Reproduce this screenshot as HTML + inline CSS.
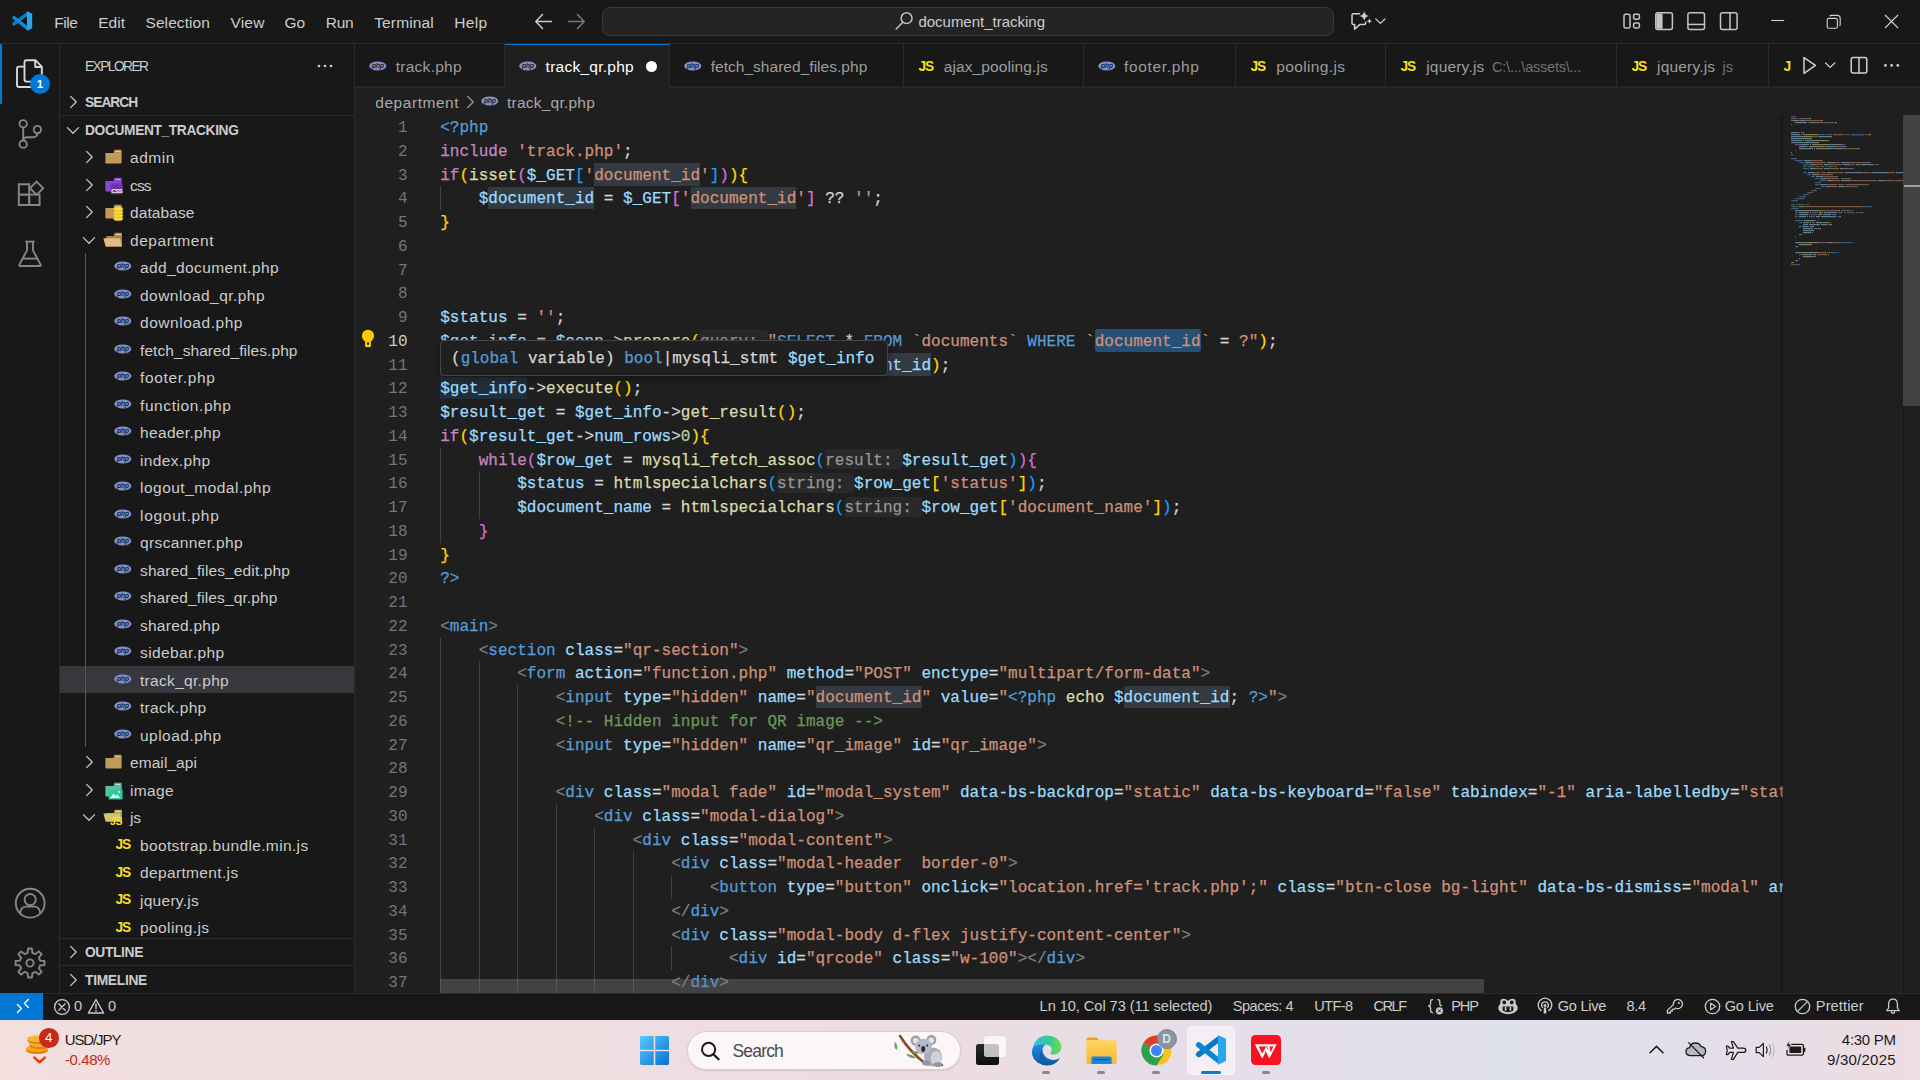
<!DOCTYPE html>
<html lang="en"><head><meta charset="utf-8"><title>track_qr.php - document_tracking - Visual Studio Code</title>
<style>

*{box-sizing:border-box;margin:0;padding:0}
html,body{width:1920px;height:1080px;overflow:hidden;background:#181818}
body{position:relative;font-family:"Liberation Sans",sans-serif;color:#ccc}
.t{position:absolute;white-space:pre;line-height:24px;height:24px}
.b{position:absolute}
svg{position:absolute;overflow:visible}
.code{-webkit-text-stroke:0.25px;position:absolute;left:441px;font-family:"Liberation Mono",monospace;font-size:16px;letter-spacing:0.0234px;white-space:pre;line-height:23.75px;height:23.75px;color:#d4d4d4}
.ln{position:absolute;left:356px;width:52px;text-align:right;font-family:"Liberation Mono",monospace;font-size:16px;letter-spacing:0.0234px;line-height:23.75px;height:23.75px;color:#6e7681}
.k{color:#569cd6}.c{color:#c586c0}.s{color:#ce9178}.v{color:#9cdcfe}.f{color:#dcdcaa}.m{color:#6a9955}.g{color:#808080}.n{color:#b5cea8}
.y{color:#ffd700}.p{color:#da70d6}.u{color:#179fff}
.h{color:#969696}


</style></head>
<body>
<!-- title bar -->
<div class="b" style="left:0px;top:0px;width:1920px;height:44px;background:#181818;border-bottom:1px solid #2b2b2b;"></div>
<svg style="left:11.9px;top:11px" width="20.4" height="20" viewBox="0 0 30 30">
<path d="M2.7 19.4 L22.6 4.2" stroke="#0a7fc8" stroke-width="5.2" stroke-linecap="round"/>
<path d="M2.7 9.9 L22.6 25.6" stroke="#0b8ad6" stroke-width="5.2" stroke-linecap="round"/>
<path d="M22.4 0.2 Q22 0 22 0.6 V29.2 Q22 29.9 22.6 29.6 L29.4 26.2 Q30 25.9 30 25.2 V4.6 Q30 3.9 29.4 3.6 Z" fill="#27a5f1"/>
<path d="M22 9 L14.4 14.8 L22 20.6 Z" fill="#181818"/>
</svg>
<div class="t " style="font-size:15.5px;color:#cccccc;top:10.55px;letter-spacing:-0.431px;left:54.25px;">File</div>
<div class="t " style="font-size:15.5px;color:#cccccc;top:10.55px;letter-spacing:0.010px;left:98.25px;">Edit</div>
<div class="t " style="font-size:15.5px;color:#cccccc;top:10.55px;letter-spacing:0.082px;left:145.50px;">Selection</div>
<div class="t " style="font-size:15.5px;color:#cccccc;top:10.55px;letter-spacing:0.171px;left:230.50px;">View</div>
<div class="t " style="font-size:15.5px;color:#cccccc;top:10.55px;letter-spacing:-0.088px;left:284.50px;">Go</div>
<div class="t " style="font-size:15.5px;color:#cccccc;top:10.55px;letter-spacing:-0.312px;left:325.75px;">Run</div>
<div class="t " style="font-size:15.5px;color:#cccccc;top:10.55px;letter-spacing:0.116px;left:374.25px;">Terminal</div>
<div class="t " style="font-size:15.5px;color:#cccccc;top:10.55px;letter-spacing:0.343px;left:454.25px;">Help</div>
<svg style="left:534px;top:13px" width="19" height="17" viewBox="0 0 19 17"><path d="M8.5 1.5 L1.8 8.5 L8.5 15.5 M1.8 8.5 H17.5" fill="none" stroke="#cccccc" stroke-width="1.5" stroke-linecap="round" stroke-linejoin="round"/></svg>
<svg style="left:566.5px;top:13px" width="19" height="17" viewBox="0 0 19 17"><path d="M10.5 1.5 L17.2 8.5 L10.5 15.5 M17.2 8.5 H1.5" fill="none" stroke="#7a7a7a" stroke-width="1.5" stroke-linecap="round" stroke-linejoin="round"/></svg>
<div class="b" style="left:602px;top:7px;width:732px;height:29px;background:#242424;border:1px solid #3a3a3a;border-radius:8px;"></div>
<svg style="left:895px;top:11px" width="19" height="20" viewBox="0 0 19 20"><circle cx="11.6" cy="7.2" r="5.4" fill="none" stroke="#c0c0c0" stroke-width="1.5"/><path d="M7.8 11.2 L1.2 18" stroke="#c0c0c0" stroke-width="1.6" stroke-linecap="round"/></svg>
<div class="t " style="font-size:15px;color:#cccccc;top:10.30px;letter-spacing:-0.008px;left:918.40px;">document_tracking</div>
<svg style="left:1350px;top:10px" width="37" height="22" viewBox="0 0 37 22">
<path d="M9.5 3.8 H3.4 Q2 3.8 2 5.2 V13.2 Q2 14.6 3.4 14.6 H4.6 V19.2 L9.6 14.6 H14.2 Q15.6 14.6 15.6 13.2 V12.2" fill="none" stroke="#d0d0d0" stroke-width="1.5" stroke-linejoin="round" stroke-linecap="round"/>
<path d="M14.2 1 Q14.8 5.4 19.2 6 Q14.8 6.6 14.2 11 Q13.6 6.6 9.2 6 Q13.6 5.4 14.2 1 Z" fill="#d0d0d0"/>
<path d="M19.4 8.6 Q19.7 10.9 22 11.2 Q19.7 11.5 19.4 13.8 Q19.1 11.5 16.8 11.2 Q19.1 10.9 19.4 8.6 Z" fill="#d0d0d0"/>
<path d="M25.8 9 L30.4 13.4 L35 9" fill="none" stroke="#c8c8c8" stroke-width="1.3" stroke-linecap="round" stroke-linejoin="round"/>
</svg>
<svg style="left:1622px;top:11px" width="120" height="21" viewBox="0 0 120 21">
<g fill="none" stroke="#c4c4c4" stroke-width="1.5">
<rect x="2" y="3.2" width="6" height="13.8" rx="1.6"/>
<rect x="11.6" y="3.2" width="5.8" height="5" rx="1.4"/>
<rect x="11.6" y="12" width="5.8" height="5" rx="1.4"/>
<rect x="33.8" y="1.8" width="16.6" height="16.6" rx="2"/>
<rect x="65.9" y="1.8" width="16.6" height="16.6" rx="2"/>
<path d="M65.9 13.4 H82.5"/>
<rect x="98.5" y="1.8" width="16.6" height="16.6" rx="2"/>
<path d="M108 1.8 V18.4"/>
</g>
<path d="M35.6 2.4 H40.6 V17.8 H35.6 Q34.4 17.8 34.4 16.6 V3.6 Q34.4 2.4 35.6 2.4 Z" fill="#c4c4c4"/>
</svg>
<svg style="left:1770px;top:13px" width="132" height="18" viewBox="0 0 132 18">
<g fill="none" stroke="#d0d0d0" stroke-width="1.1">
<path d="M1.2 7.5 H14.2"/>
<rect x="57.2" y="5.4" width="10.2" height="9.8" rx="1.8"/>
<path d="M59.6 3 Q60.2 2.4 61.6 2.4 H67.2 Q70.2 2.4 70.2 5.4 V11 Q70.2 12.4 69.6 13"/>
<path d="M115 2 L128 15 M128 2 L115 15"/>
</g></svg>
<!-- activity bar -->
<div class="b" style="left:0px;top:44px;width:60px;height:949px;background:#181818;border-right:1px solid #2b2b2b;"></div>
<div class="b" style="left:0px;top:44px;width:2px;height:60px;background:#0078d4;"></div>
<svg style="left:15px;top:58px" width="30" height="32" viewBox="0 0 30 32">
<g fill="none" stroke="#d7d7d7" stroke-width="1.9" stroke-linejoin="round">
<path d="M9.5 8.4 V4.2 Q9.5 2.2 11.5 2.2 H20.4 L26.8 8.6 V21.6 Q26.8 23.6 24.8 23.6 H11.5 Q9.5 23.6 9.5 21.6 Z"/>
<path d="M20.2 2.4 V9 H26.6"/>
<path d="M9.5 8.6 H4 Q2 8.6 2 10.6 V27 Q2 29 4 29 H16 Q18 29 18 27 V23.8"/>
</g></svg>
<div class="b" style="left:30px;top:74px;width:20px;height:20px;border-radius:50%;background:#0078d4;color:#fff;font-size:11.5px;font-weight:bold;text-align:center;line-height:20px">1</div>
<svg style="left:17px;top:118px" width="27" height="32" viewBox="0 0 27 32">
<g fill="none" stroke="#868686" stroke-width="1.9">
<circle cx="6.2" cy="5.8" r="3.7"/><circle cx="6.2" cy="26.2" r="3.7"/><circle cx="20.4" cy="11.6" r="3.7"/>
<path d="M6.2 9.6 V22.4"/><path d="M20.4 15.4 Q20.4 19.2 14.6 19.2 H10.6 Q6.2 19.2 6.2 22.4" />
</g></svg>
<svg style="left:16px;top:179px" width="30" height="30" viewBox="0 0 30 30">
<g fill="none" stroke="#868686" stroke-width="1.9" stroke-linejoin="miter">
<path d="M2.8 5.2 H13.2 V15.6 H2.8 Z"/><path d="M2.8 15.6 H13.2 V26 H2.8 Z"/><path d="M13.2 15.6 H23.6 V26 H13.2 Z"/>
<path d="M20.6 2.6 L27.2 9.2 L20.6 15.8 L14 9.2 Z"/>
</g></svg>
<svg style="left:17px;top:239px" width="27" height="30" viewBox="0 0 27 30">
<g fill="none" stroke="#868686" stroke-width="1.9" stroke-linejoin="round">
<path d="M8.4 2.6 H17.6"/><path d="M10 2.6 V11.4 L2.4 25.6 Q1.8 27 3.4 27 H22.6 Q24.2 27 23.6 25.6 L16 11.4 V2.6"/><path d="M5.6 19.6 H20.4"/>
</g></svg>
<svg style="left:14px;top:887px" width="33" height="33" viewBox="0 0 33 33">
<g fill="none" stroke="#868686" stroke-width="1.9">
<circle cx="16.2" cy="16.2" r="14.4"/><circle cx="16.2" cy="12.6" r="5.6"/>
<path d="M6.2 26.2 Q7 19.6 12 19.6 H20.4 Q25.4 19.6 26.2 26.2"/>
</g></svg>
<svg style="left:14px;top:947px" width="32" height="32" viewBox="0 0 32 32">
<g fill="none" stroke="#868686" stroke-width="1.9" stroke-linejoin="round">
<path d="M13.57 5.89 L14.06 1.53 L17.94 1.53 L18.43 5.89 L21.43 7.13 L24.86 4.39 L27.61 7.14 L24.87 10.57 L26.11 13.57 L30.47 14.06 L30.47 17.94 L26.11 18.43 L24.87 21.43 L27.61 24.86 L24.86 27.61 L21.43 24.87 L18.43 26.11 L17.94 30.47 L14.06 30.47 L13.57 26.11 L10.57 24.87 L7.14 27.61 L4.39 24.86 L7.13 21.43 L5.89 18.43 L1.53 17.94 L1.53 14.06 L5.89 13.57 L7.13 10.57 L4.39 7.14 L7.14 4.39 L10.57 7.13 Z"/><circle cx="16" cy="16" r="3.6"/>
</g></svg>
<!-- sidebar -->
<div class="b" style="left:60px;top:44px;width:295px;height:949px;background:#181818;border-right:1px solid #2b2b2b;"></div>
<div class="t " style="font-size:13.75px;color:#cccccc;top:54.80px;letter-spacing:-1.548px;left:85.00px;">EXPLORER</div>
<svg style="left:317px;top:64px" width="16" height="4" viewBox="0 0 16 4"><circle cx="2" cy="2" r="1.35" fill="#ccc"/><circle cx="8" cy="2" r="1.35" fill="#ccc"/><circle cx="14" cy="2" r="1.35" fill="#ccc"/></svg>
<svg style="left:69px;top:95px" width="9" height="14" viewBox="0 0 9 14"><path d="M1.6 1.4 L7.2 7 L1.6 12.6" fill="none" stroke="#c5c5c5" stroke-width="1.3" stroke-linecap="round" stroke-linejoin="round"/></svg>
<div class="t " style="font-size:13.75px;color:#cccccc;top:91.10px;font-weight:bold;letter-spacing:-0.977px;left:85.00px;">SEARCH</div>
<div class="b" style="left:60px;top:115px;width:294px;height:1px;background:#2b2b2b;"></div>
<svg style="left:65.5px;top:126px" width="14" height="9" viewBox="0 0 14 9"><path d="M1.4 1.6 L7 7.2 L12.6 1.6" fill="none" stroke="#c5c5c5" stroke-width="1.3" stroke-linecap="round" stroke-linejoin="round"/></svg>
<div class="t " style="font-size:13.75px;color:#cccccc;top:118.80px;font-weight:bold;letter-spacing:-0.362px;left:85.00px;">DOCUMENT_TRACKING</div>
<div class="b" style="left:60px;top:143px;width:294px;height:795px;overflow:hidden">
<svg style="left:25.2px;top:6.75px" width="9" height="14" viewBox="0 0 9 14"><path d="M1.6 1.4 L7.2 7 L1.6 12.6" fill="none" stroke="#c5c5c5" stroke-width="1.3" stroke-linecap="round" stroke-linejoin="round"/></svg>
<svg style="left:45px;top:6.15px" width="20" height="18" viewBox="0 0 20 18"><path d="M9.4 0.8 H15.8 Q16.6 0.8 16.6 1.6 V5 H8.2 Z" fill="#b98f4f"/><path d="M10.6 2.5 H15.4" stroke="#e8d2a8" stroke-width=".9"/><path d="M0.4 4 H16.6 V13.8 Q16.6 14.6 15.8 14.6 H1.2 Q0.4 14.6 0.4 13.8 Z" fill="#c49a5a"/></svg>
<div class="t " style="font-size:15.5px;color:#cccccc;top:3.10px;letter-spacing:0.557px;left:70.00px;">admin</div>
<svg style="left:25.2px;top:34.75px" width="9" height="14" viewBox="0 0 9 14"><path d="M1.6 1.4 L7.2 7 L1.6 12.6" fill="none" stroke="#c5c5c5" stroke-width="1.3" stroke-linecap="round" stroke-linejoin="round"/></svg>
<svg style="left:45px;top:34.15px" width="20" height="18" viewBox="0 0 20 18"><path d="M9.4 0.8 H15.8 Q16.6 0.8 16.6 1.6 V5 H8.2 Z" fill="#8a46d8"/><path d="M10.6 2.5 H15.4" stroke="#c9a6f2" stroke-width=".9"/><path d="M0.4 4 H16.6 V13.8 Q16.6 14.6 15.8 14.6 H1.2 Q0.4 14.6 0.4 13.8 Z" fill="#8a46d8"/><rect x="5.6" y="6.6" width="12.2" height="10.6" rx="1.2" fill="#6b36a8"/><text x="11.8" y="15.6" font-size="5.8" font-weight="bold" text-anchor="middle" fill="#ffffff" font-family="Liberation Sans, sans-serif" letter-spacing="-0.25">CSS</text></svg>
<div class="t " style="font-size:15.5px;color:#cccccc;top:30.60px;letter-spacing:-0.850px;left:70.00px;">css</div>
<svg style="left:25.2px;top:61.75px" width="9" height="14" viewBox="0 0 9 14"><path d="M1.6 1.4 L7.2 7 L1.6 12.6" fill="none" stroke="#c5c5c5" stroke-width="1.3" stroke-linecap="round" stroke-linejoin="round"/></svg>
<svg style="left:45px;top:61.15px" width="20" height="18" viewBox="0 0 20 18"><path d="M9.4 0.8 H15.8 Q16.6 0.8 16.6 1.6 V5 H8.2 Z" fill="#b98f4f"/><path d="M10.6 2.5 H15.4" stroke="#e8d2a8" stroke-width=".9"/><path d="M0.4 4 H16.6 V13.8 Q16.6 14.6 15.8 14.6 H1.2 Q0.4 14.6 0.4 13.8 Z" fill="#c49a5a"/><g fill="#fbdc3c" stroke="#c9a227" stroke-width=".55"><ellipse cx="13.2" cy="14.6" rx="4.7" ry="2.2"/><ellipse cx="13.2" cy="11.4" rx="4.7" ry="2.2"/><ellipse cx="13.2" cy="8.2" rx="4.7" ry="2.2"/><ellipse cx="13.2" cy="5" rx="4.7" ry="2.2"/></g></svg>
<div class="t " style="font-size:15.5px;color:#cccccc;top:58.10px;letter-spacing:0.090px;left:70.00px;">database</div>
<svg style="left:22px;top:92.75px" width="14" height="9" viewBox="0 0 14 9"><path d="M1.4 1.6 L7 7.2 L12.6 1.6" fill="none" stroke="#c5c5c5" stroke-width="1.3" stroke-linecap="round" stroke-linejoin="round"/></svg>
<svg style="left:42.5px;top:89.15px" width="22" height="18" viewBox="0 0 22 18"><path d="M11.6 0.8 H18.2 Q19 0.8 19 1.6 V6 H10.4 Z" fill="#b48b4e"/><path d="M12.8 2.5 H17.8" stroke="#e8d2a8" stroke-width=".9"/><path d="M3.4 4 H19 V14.6 H3.4 Z" fill="#a98449"/><path d="M0.4 6.2 H17 L18.8 14.6 H2.6 Z" fill="#e0bd84"/></svg>
<div class="t " style="font-size:15.5px;color:#cccccc;top:85.60px;letter-spacing:0.559px;left:70.00px;">department</div>
<svg style="left:54.0px;top:118.15px" width="18" height="11" viewBox="0 0 18 11"><ellipse cx="8.8" cy="5" rx="8.6" ry="4.6" fill="#8290c4"/><text x="8.8" y="7.4" font-size="7" font-style="italic" font-weight="bold" text-anchor="middle" fill="#1f2540" font-family="Liberation Sans, sans-serif" letter-spacing="-0.2">php</text></svg>
<div class="t " style="font-size:15.5px;color:#cccccc;top:113.10px;letter-spacing:0.393px;left:80.00px;">add_document.php</div>
<svg style="left:54.0px;top:146.15px" width="18" height="11" viewBox="0 0 18 11"><ellipse cx="8.8" cy="5" rx="8.6" ry="4.6" fill="#8290c4"/><text x="8.8" y="7.4" font-size="7" font-style="italic" font-weight="bold" text-anchor="middle" fill="#1f2540" font-family="Liberation Sans, sans-serif" letter-spacing="-0.2">php</text></svg>
<div class="t " style="font-size:15.5px;color:#cccccc;top:140.60px;letter-spacing:0.462px;left:80.00px;">download_qr.php</div>
<svg style="left:54.0px;top:173.15px" width="18" height="11" viewBox="0 0 18 11"><ellipse cx="8.8" cy="5" rx="8.6" ry="4.6" fill="#8290c4"/><text x="8.8" y="7.4" font-size="7" font-style="italic" font-weight="bold" text-anchor="middle" fill="#1f2540" font-family="Liberation Sans, sans-serif" letter-spacing="-0.2">php</text></svg>
<div class="t " style="font-size:15.5px;color:#cccccc;top:168.10px;letter-spacing:0.539px;left:80.00px;">download.php</div>
<svg style="left:54.0px;top:201.15px" width="18" height="11" viewBox="0 0 18 11"><ellipse cx="8.8" cy="5" rx="8.6" ry="4.6" fill="#8290c4"/><text x="8.8" y="7.4" font-size="7" font-style="italic" font-weight="bold" text-anchor="middle" fill="#1f2540" font-family="Liberation Sans, sans-serif" letter-spacing="-0.2">php</text></svg>
<div class="t " style="font-size:15.5px;color:#cccccc;top:195.60px;letter-spacing:0.070px;left:80.00px;">fetch_shared_files.php</div>
<svg style="left:54.0px;top:228.15px" width="18" height="11" viewBox="0 0 18 11"><ellipse cx="8.8" cy="5" rx="8.6" ry="4.6" fill="#8290c4"/><text x="8.8" y="7.4" font-size="7" font-style="italic" font-weight="bold" text-anchor="middle" fill="#1f2540" font-family="Liberation Sans, sans-serif" letter-spacing="-0.2">php</text></svg>
<div class="t " style="font-size:15.5px;color:#cccccc;top:223.10px;letter-spacing:0.655px;left:80.00px;">footer.php</div>
<svg style="left:54.0px;top:256.15px" width="18" height="11" viewBox="0 0 18 11"><ellipse cx="8.8" cy="5" rx="8.6" ry="4.6" fill="#8290c4"/><text x="8.8" y="7.4" font-size="7" font-style="italic" font-weight="bold" text-anchor="middle" fill="#1f2540" font-family="Liberation Sans, sans-serif" letter-spacing="-0.2">php</text></svg>
<div class="t " style="font-size:15.5px;color:#cccccc;top:250.60px;letter-spacing:0.587px;left:80.00px;">function.php</div>
<svg style="left:54.0px;top:283.15px" width="18" height="11" viewBox="0 0 18 11"><ellipse cx="8.8" cy="5" rx="8.6" ry="4.6" fill="#8290c4"/><text x="8.8" y="7.4" font-size="7" font-style="italic" font-weight="bold" text-anchor="middle" fill="#1f2540" font-family="Liberation Sans, sans-serif" letter-spacing="-0.2">php</text></svg>
<div class="t " style="font-size:15.5px;color:#cccccc;top:278.10px;letter-spacing:0.342px;left:80.00px;">header.php</div>
<svg style="left:54.0px;top:311.15px" width="18" height="11" viewBox="0 0 18 11"><ellipse cx="8.8" cy="5" rx="8.6" ry="4.6" fill="#8290c4"/><text x="8.8" y="7.4" font-size="7" font-style="italic" font-weight="bold" text-anchor="middle" fill="#1f2540" font-family="Liberation Sans, sans-serif" letter-spacing="-0.2">php</text></svg>
<div class="t " style="font-size:15.5px;color:#cccccc;top:305.60px;letter-spacing:0.364px;left:80.00px;">index.php</div>
<svg style="left:54.0px;top:338.15px" width="18" height="11" viewBox="0 0 18 11"><ellipse cx="8.8" cy="5" rx="8.6" ry="4.6" fill="#8290c4"/><text x="8.8" y="7.4" font-size="7" font-style="italic" font-weight="bold" text-anchor="middle" fill="#1f2540" font-family="Liberation Sans, sans-serif" letter-spacing="-0.2">php</text></svg>
<div class="t " style="font-size:15.5px;color:#cccccc;top:333.10px;letter-spacing:0.485px;left:80.00px;">logout_modal.php</div>
<svg style="left:54.0px;top:366.15px" width="18" height="11" viewBox="0 0 18 11"><ellipse cx="8.8" cy="5" rx="8.6" ry="4.6" fill="#8290c4"/><text x="8.8" y="7.4" font-size="7" font-style="italic" font-weight="bold" text-anchor="middle" fill="#1f2540" font-family="Liberation Sans, sans-serif" letter-spacing="-0.2">php</text></svg>
<div class="t " style="font-size:15.5px;color:#cccccc;top:360.60px;letter-spacing:0.710px;left:80.00px;">logout.php</div>
<svg style="left:54.0px;top:393.15px" width="18" height="11" viewBox="0 0 18 11"><ellipse cx="8.8" cy="5" rx="8.6" ry="4.6" fill="#8290c4"/><text x="8.8" y="7.4" font-size="7" font-style="italic" font-weight="bold" text-anchor="middle" fill="#1f2540" font-family="Liberation Sans, sans-serif" letter-spacing="-0.2">php</text></svg>
<div class="t " style="font-size:15.5px;color:#cccccc;top:388.10px;letter-spacing:0.366px;left:80.00px;">qrscanner.php</div>
<svg style="left:54.0px;top:421.15px" width="18" height="11" viewBox="0 0 18 11"><ellipse cx="8.8" cy="5" rx="8.6" ry="4.6" fill="#8290c4"/><text x="8.8" y="7.4" font-size="7" font-style="italic" font-weight="bold" text-anchor="middle" fill="#1f2540" font-family="Liberation Sans, sans-serif" letter-spacing="-0.2">php</text></svg>
<div class="t " style="font-size:15.5px;color:#cccccc;top:415.60px;letter-spacing:0.126px;left:80.00px;">shared_files_edit.php</div>
<svg style="left:54.0px;top:448.15px" width="18" height="11" viewBox="0 0 18 11"><ellipse cx="8.8" cy="5" rx="8.6" ry="4.6" fill="#8290c4"/><text x="8.8" y="7.4" font-size="7" font-style="italic" font-weight="bold" text-anchor="middle" fill="#1f2540" font-family="Liberation Sans, sans-serif" letter-spacing="-0.2">php</text></svg>
<div class="t " style="font-size:15.5px;color:#cccccc;top:443.10px;letter-spacing:0.116px;left:80.00px;">shared_files_qr.php</div>
<svg style="left:54.0px;top:476.15px" width="18" height="11" viewBox="0 0 18 11"><ellipse cx="8.8" cy="5" rx="8.6" ry="4.6" fill="#8290c4"/><text x="8.8" y="7.4" font-size="7" font-style="italic" font-weight="bold" text-anchor="middle" fill="#1f2540" font-family="Liberation Sans, sans-serif" letter-spacing="-0.2">php</text></svg>
<div class="t " style="font-size:15.5px;color:#cccccc;top:470.60px;letter-spacing:0.244px;left:80.00px;">shared.php</div>
<svg style="left:54.0px;top:503.15px" width="18" height="11" viewBox="0 0 18 11"><ellipse cx="8.8" cy="5" rx="8.6" ry="4.6" fill="#8290c4"/><text x="8.8" y="7.4" font-size="7" font-style="italic" font-weight="bold" text-anchor="middle" fill="#1f2540" font-family="Liberation Sans, sans-serif" letter-spacing="-0.2">php</text></svg>
<div class="t " style="font-size:15.5px;color:#cccccc;top:498.10px;letter-spacing:0.395px;left:80.00px;">sidebar.php</div>
<div class="b" style="left:0px;top:523px;width:294px;height:27px;background:#37373d;"></div>
<svg style="left:54.0px;top:531.15px" width="18" height="11" viewBox="0 0 18 11"><ellipse cx="8.8" cy="5" rx="8.6" ry="4.6" fill="#8290c4"/><text x="8.8" y="7.4" font-size="7" font-style="italic" font-weight="bold" text-anchor="middle" fill="#1f2540" font-family="Liberation Sans, sans-serif" letter-spacing="-0.2">php</text></svg>
<div class="t " style="font-size:15.5px;color:#cccccc;top:525.60px;letter-spacing:0.308px;left:80.00px;">track_qr.php</div>
<svg style="left:54.0px;top:558.15px" width="18" height="11" viewBox="0 0 18 11"><ellipse cx="8.8" cy="5" rx="8.6" ry="4.6" fill="#8290c4"/><text x="8.8" y="7.4" font-size="7" font-style="italic" font-weight="bold" text-anchor="middle" fill="#1f2540" font-family="Liberation Sans, sans-serif" letter-spacing="-0.2">php</text></svg>
<div class="t " style="font-size:15.5px;color:#cccccc;top:553.10px;letter-spacing:0.305px;left:80.00px;">track.php</div>
<svg style="left:54.0px;top:586.15px" width="18" height="11" viewBox="0 0 18 11"><ellipse cx="8.8" cy="5" rx="8.6" ry="4.6" fill="#8290c4"/><text x="8.8" y="7.4" font-size="7" font-style="italic" font-weight="bold" text-anchor="middle" fill="#1f2540" font-family="Liberation Sans, sans-serif" letter-spacing="-0.2">php</text></svg>
<div class="t " style="font-size:15.5px;color:#cccccc;top:580.60px;letter-spacing:0.479px;left:80.00px;">upload.php</div>
<svg style="left:25.2px;top:611.75px" width="9" height="14" viewBox="0 0 9 14"><path d="M1.6 1.4 L7.2 7 L1.6 12.6" fill="none" stroke="#c5c5c5" stroke-width="1.3" stroke-linecap="round" stroke-linejoin="round"/></svg>
<svg style="left:45px;top:611.15px" width="20" height="18" viewBox="0 0 20 18"><path d="M9.4 0.8 H15.8 Q16.6 0.8 16.6 1.6 V5 H8.2 Z" fill="#b98f4f"/><path d="M10.6 2.5 H15.4" stroke="#e8d2a8" stroke-width=".9"/><path d="M0.4 4 H16.6 V13.8 Q16.6 14.6 15.8 14.6 H1.2 Q0.4 14.6 0.4 13.8 Z" fill="#c49a5a"/></svg>
<div class="t " style="font-size:15.5px;color:#cccccc;top:608.10px;letter-spacing:0.073px;left:70.00px;">email_api</div>
<svg style="left:25.2px;top:639.75px" width="9" height="14" viewBox="0 0 9 14"><path d="M1.6 1.4 L7.2 7 L1.6 12.6" fill="none" stroke="#c5c5c5" stroke-width="1.3" stroke-linecap="round" stroke-linejoin="round"/></svg>
<svg style="left:45px;top:639.15px" width="20" height="18" viewBox="0 0 20 18"><path d="M9.4 0.8 H15.8 Q16.6 0.8 16.6 1.6 V5 H8.2 Z" fill="#57b897"/><path d="M10.6 2.5 H15.4" stroke="#bfeedd" stroke-width=".9"/><path d="M0.4 4 H16.6 V13.8 Q16.6 14.6 15.8 14.6 H1.2 Q0.4 14.6 0.4 13.8 Z" fill="#5fbf9f"/><rect x="3.6" y="7.4" width="14" height="10" rx=".8" fill="#2bcaa0"/><path d="M5.4 16 L8.6 11.6 L10.6 14.2 L12.2 12.6 L15 16 Z" fill="#ffffff"/><circle cx="14.2" cy="10" r="1" fill="#ffffff"/></svg>
<div class="t " style="font-size:15.5px;color:#cccccc;top:635.60px;letter-spacing:0.357px;left:70.00px;">image</div>
<svg style="left:22px;top:669.75px" width="14" height="9" viewBox="0 0 14 9"><path d="M1.4 1.6 L7 7.2 L12.6 1.6" fill="none" stroke="#c5c5c5" stroke-width="1.3" stroke-linecap="round" stroke-linejoin="round"/></svg>
<svg style="left:42.5px;top:666.15px" width="22" height="20" viewBox="0 0 22 20"><path d="M11.6 0.8 H18.2 Q19 0.8 19 1.6 V6 H10.4 Z" fill="#b5a85a"/><path d="M12.8 2.5 H17.8" stroke="#ece3a8" stroke-width=".9"/><path d="M3.4 4 H19 V12.6 H3.4 Z" fill="#a89b50"/><path d="M0.4 4.6 H17 L18.8 12.6 H2.6 Z" fill="#d3c66e"/><text x="13" y="16.4" font-size="10.5" font-weight="bold" text-anchor="middle" fill="#f7df1e" font-family="Liberation Sans, sans-serif" letter-spacing="-0.5">JS</text></svg>
<div class="t " style="font-size:15.5px;color:#cccccc;top:663.10px;letter-spacing:-0.097px;left:70.00px;">js</div>
<div class="t" style="left:55.5px;top:690.15px;font-size:13.75px;font-weight:bold;color:#f7df1e;letter-spacing:-1.1px">JS</div>
<div class="t " style="font-size:15.5px;color:#cccccc;top:690.60px;letter-spacing:0.358px;left:80.00px;">bootstrap.bundle.min.js</div>
<div class="t" style="left:55.5px;top:717.65px;font-size:13.75px;font-weight:bold;color:#f7df1e;letter-spacing:-1.1px">JS</div>
<div class="t " style="font-size:15.5px;color:#cccccc;top:718.10px;letter-spacing:0.353px;left:80.00px;">department.js</div>
<div class="t" style="left:55.5px;top:745.15px;font-size:13.75px;font-weight:bold;color:#f7df1e;letter-spacing:-1.1px">JS</div>
<div class="t " style="font-size:15.5px;color:#cccccc;top:745.60px;letter-spacing:0.270px;left:80.00px;">jquery.js</div>
<div class="t" style="left:55.5px;top:772.65px;font-size:13.75px;font-weight:bold;color:#f7df1e;letter-spacing:-1.1px">JS</div>
<div class="t " style="font-size:15.5px;color:#cccccc;top:773.10px;letter-spacing:0.401px;left:80.00px;">pooling.js</div>
<div class="b" style="left:25px;top:110px;width:1px;height:494px;background:#585858;"></div>
</div>
<div class="b" style="left:60px;top:938px;width:294px;height:1px;background:#2b2b2b;"></div>
<svg style="left:69px;top:945px" width="9" height="14" viewBox="0 0 9 14"><path d="M1.6 1.4 L7.2 7 L1.6 12.6" fill="none" stroke="#c5c5c5" stroke-width="1.3" stroke-linecap="round" stroke-linejoin="round"/></svg>
<div class="t " style="font-size:13.75px;color:#cccccc;top:941.10px;font-weight:bold;letter-spacing:-0.335px;left:85.00px;">OUTLINE</div>
<div class="b" style="left:60px;top:965px;width:294px;height:1px;background:#2b2b2b;"></div>
<svg style="left:69px;top:972.5px" width="9" height="14" viewBox="0 0 9 14"><path d="M1.6 1.4 L7.2 7 L1.6 12.6" fill="none" stroke="#c5c5c5" stroke-width="1.3" stroke-linecap="round" stroke-linejoin="round"/></svg>
<div class="t " style="font-size:13.75px;color:#cccccc;top:968.60px;font-weight:bold;letter-spacing:-0.271px;left:85.00px;">TIMELINE</div>
<!-- tabs -->
<div class="b" style="left:355px;top:44px;width:1565px;height:44px;background:#181818;border-bottom:1px solid #2b2b2b;"></div>
<div class="b" style="left:355px;top:86px;width:1565px;height:1px;background:#212121;"></div>
<div class="b" style="left:355px;top:44px;width:150px;height:42px;background:#181818;border-right:1px solid #2b2b2b;"></div>
<svg style="left:369.0px;top:60.699999999999996px" width="18" height="11" viewBox="0 0 18 11"><ellipse cx="8.8" cy="5" rx="8.6" ry="4.6" fill="#8290c4"/><text x="8.8" y="7.4" font-size="7" font-style="italic" font-weight="bold" text-anchor="middle" fill="#1f2540" font-family="Liberation Sans, sans-serif" letter-spacing="-0.2">php</text></svg>
<div class="t " style="font-size:15.5px;color:#9d9d9d;top:54.55px;letter-spacing:0.272px;left:395.70px;">track.php</div>
<div class="b" style="left:505px;top:44px;width:165px;height:44px;background:#1f1f1f;border-top:1.5px solid #0078d4;border-right:1px solid #2b2b2b;"></div>
<svg style="left:519.0px;top:60.699999999999996px" width="18" height="11" viewBox="0 0 18 11"><ellipse cx="8.8" cy="5" rx="8.6" ry="4.6" fill="#8290c4"/><text x="8.8" y="7.4" font-size="7" font-style="italic" font-weight="bold" text-anchor="middle" fill="#1f2540" font-family="Liberation Sans, sans-serif" letter-spacing="-0.2">php</text></svg>
<div class="t " style="font-size:15.5px;color:#ffffff;top:54.55px;letter-spacing:0.258px;left:545.60px;">track_qr.php</div>
<div class="b" style="left:646.3px;top:60.5px;width:11px;height:11px;border-radius:50%;background:#ffffff"></div>
<div class="b" style="left:670px;top:44px;width:234px;height:42px;background:#181818;border-right:1px solid #2b2b2b;"></div>
<svg style="left:684.0px;top:60.699999999999996px" width="18" height="11" viewBox="0 0 18 11"><ellipse cx="8.8" cy="5" rx="8.6" ry="4.6" fill="#8290c4"/><text x="8.8" y="7.4" font-size="7" font-style="italic" font-weight="bold" text-anchor="middle" fill="#1f2540" font-family="Liberation Sans, sans-serif" letter-spacing="-0.2">php</text></svg>
<div class="t " style="font-size:15.5px;color:#9d9d9d;top:54.55px;letter-spacing:0.029px;left:710.70px;">fetch_shared_files.php</div>
<div class="b" style="left:904px;top:44px;width:180px;height:42px;background:#181818;border-right:1px solid #2b2b2b;"></div>
<div class="t" style="left:918.5px;top:55.1px;font-size:13.75px;font-weight:bold;color:#f7df1e;letter-spacing:-1.1px">JS</div>
<div class="t " style="font-size:15.5px;color:#9d9d9d;top:54.55px;letter-spacing:0.110px;left:943.70px;">ajax_pooling.js</div>
<div class="b" style="left:1084px;top:44px;width:152px;height:42px;background:#181818;border-right:1px solid #2b2b2b;"></div>
<svg style="left:1098.0px;top:60.699999999999996px" width="18" height="11" viewBox="0 0 18 11"><ellipse cx="8.8" cy="5" rx="8.6" ry="4.6" fill="#8290c4"/><text x="8.8" y="7.4" font-size="7" font-style="italic" font-weight="bold" text-anchor="middle" fill="#1f2540" font-family="Liberation Sans, sans-serif" letter-spacing="-0.2">php</text></svg>
<div class="t " style="font-size:15.5px;color:#9d9d9d;top:54.55px;letter-spacing:0.655px;left:1124.00px;">footer.php</div>
<div class="b" style="left:1236px;top:44px;width:150px;height:42px;background:#181818;border-right:1px solid #2b2b2b;"></div>
<div class="t" style="left:1250.5px;top:55.1px;font-size:13.75px;font-weight:bold;color:#f7df1e;letter-spacing:-1.1px">JS</div>
<div class="t " style="font-size:15.5px;color:#9d9d9d;top:54.55px;letter-spacing:0.371px;left:1276.20px;">pooling.js</div>
<div class="b" style="left:1386px;top:44px;width:231px;height:42px;background:#181818;border-right:1px solid #2b2b2b;"></div>
<div class="t" style="left:1400.5px;top:55.1px;font-size:13.75px;font-weight:bold;color:#f7df1e;letter-spacing:-1.1px">JS</div>
<div class="t " style="font-size:15.5px;color:#9d9d9d;top:54.55px;letter-spacing:0.193px;left:1426.20px;">jquery.js</div>
<div class="t " style="font-size:14.5px;color:#727272;top:54.80px;letter-spacing:-0.216px;left:1492.00px;">C:\...\assets\...</div>
<div class="b" style="left:1617px;top:44px;width:152px;height:42px;background:#181818;border-right:1px solid #2b2b2b;"></div>
<div class="t" style="left:1631.5px;top:55.1px;font-size:13.75px;font-weight:bold;color:#f7df1e;letter-spacing:-1.1px">JS</div>
<div class="t " style="font-size:15.5px;color:#9d9d9d;top:54.55px;letter-spacing:0.193px;left:1657.00px;">jquery.js</div>
<div class="t " style="font-size:14.5px;color:#727272;top:54.80px;letter-spacing:0.064px;left:1722.40px;">js</div>
<div class="b" style="left:1769px;top:44px;width:23px;height:43px;overflow:hidden"><div class="t" style="left:14.5px;top:11.1px;font-size:13.75px;font-weight:bold;color:#f7df1e;letter-spacing:-1.1px">J</div></div>
<div class="b" style="left:1792px;top:44px;width:128px;height:42px;background:#181818;"></div>
<svg style="left:1801px;top:55px" width="100" height="22" viewBox="0 0 100 22">
<path d="M3 2.6 L14.4 10.4 L3 18.4 Z" fill="none" stroke="#d0d0d0" stroke-width="1.5" stroke-linejoin="round"/>
<path d="M24.6 8 L29.2 12.4 L33.8 8" fill="none" stroke="#c8c8c8" stroke-width="1.3" stroke-linecap="round" stroke-linejoin="round"/>
<rect x="50.2" y="2.4" width="15.6" height="15.6" rx="2" fill="none" stroke="#d0d0d0" stroke-width="1.5"/>
<path d="M58 2.4 V18" stroke="#d0d0d0" stroke-width="1.5"/>
<circle cx="84.4" cy="10.4" r="1.4" fill="#d0d0d0"/><circle cx="90.6" cy="10.4" r="1.4" fill="#d0d0d0"/><circle cx="96.8" cy="10.4" r="1.4" fill="#d0d0d0"/>
</svg>
<div class="b" style="left:355px;top:88px;width:1565px;height:905px;background:#1f1f1f;"></div>
<div class="t " style="font-size:15.5px;color:#a9a9a9;top:90.85px;letter-spacing:0.539px;left:375.30px;">department</div>
<svg style="left:465.5px;top:95.3px" width="9" height="14" viewBox="0 0 9 14"><path d="M1.6 1.4 L7.2 7 L1.6 12.6" fill="none" stroke="#a0a0a0" stroke-width="1.3" stroke-linecap="round" stroke-linejoin="round"/></svg>
<svg style="left:480.5px;top:96.2px" width="18" height="11" viewBox="0 0 18 11"><ellipse cx="8.8" cy="5" rx="8.6" ry="4.6" fill="#8290c4"/><text x="8.8" y="7.4" font-size="7" font-style="italic" font-weight="bold" text-anchor="middle" fill="#1f2540" font-family="Liberation Sans, sans-serif" letter-spacing="-0.2">php</text></svg>
<div class="t " style="font-size:15.5px;color:#a9a9a9;top:90.85px;letter-spacing:0.225px;left:507.00px;">track_qr.php</div>
<!-- editor -->
<div class="b" style="left:355px;top:115px;width:1428px;height:878px;overflow:hidden">
<div class="ln" style="left:0.6px;top:2.20px;">1</div>
<div class="code" style="left:85.2px;top:2.20px"><span class="k">&lt;?php</span></div>
<div class="ln" style="left:0.6px;top:25.95px;">2</div>
<div class="code" style="left:85.2px;top:25.95px"><span class="c">include</span> <span class="s">&#x27;track.php&#x27;</span>;</div>
<div class="ln" style="left:0.6px;top:49.70px;">3</div>
<div class="b" style="left:239.3px;top:48.1px;width:105.88px;height:22.6px;background:#343a41;"></div>
<div class="code" style="left:85.2px;top:49.70px"><span class="c">if</span><span class="y">(</span><span class="f">isset</span><span class="p">(</span><span class="v">$_GET</span><span class="u">[</span><span class="s">&#x27;</span><span class="s">document_id</span><span class="s">&#x27;</span><span class="u">]</span><span class="p">)</span><span class="y">)</span><span class="y">{</span></div>
<div class="ln" style="left:0.6px;top:73.45px;">4</div>
<div class="b" style="left:85.0px;top:71.25px;width:1px;height:23.75px;background:#404040;"></div>
<div class="b" style="left:133.43px;top:71.85px;width:105.88px;height:22.6px;background:#343a41;"></div>
<div class="b" style="left:335.55px;top:71.85px;width:105.88px;height:22.6px;background:#343a41;"></div>
<div class="code" style="left:85.2px;top:73.45px">    <span class="v">$</span><span class="v">document_id</span> = <span class="v">$_GET</span><span class="p">[</span><span class="s">&#x27;</span><span class="s">document_id</span><span class="s">&#x27;</span><span class="p">]</span> ?? <span class="s">&#x27;&#x27;</span>;</div>
<div class="ln" style="left:0.6px;top:97.20px;">5</div>
<div class="code" style="left:85.2px;top:97.20px"><span class="y">}</span></div>
<div class="ln" style="left:0.6px;top:120.95px;">6</div>
<div class="ln" style="left:0.6px;top:144.70px;">7</div>
<div class="ln" style="left:0.6px;top:168.45px;">8</div>
<div class="ln" style="left:0.6px;top:192.20px;">9</div>
<div class="code" style="left:85.2px;top:192.20px"><span class="v">$status</span> = <span class="s">&#x27;&#x27;</span>;</div>
<div class="ln" style="left:0.6px;top:215.95px;color:#cccccc;">10</div>
<div class="b" style="left:345.18px;top:215.25px;width:67.38px;height:20px;background:#292929;border-radius:3px;"></div>
<div class="b" style="left:739.8px;top:214.35px;width:105.88px;height:22.6px;background:#264f78;border-radius:3px;"></div>
<div class="code" style="left:85.2px;top:215.95px"><span class="v">$get_info</span> = <span class="v">$conn</span>-&gt;<span class="f">prepare</span><span class="y">(</span><span class="h">query: </span><span class="s">&quot;</span><span class="k">SELECT</span><span class="s"> </span>*<span class="s"> </span><span class="k">FROM</span><span class="s"> `documents` </span><span class="k">WHERE</span><span class="s"> `</span><span class="s">document_id</span><span class="s">` </span>=<span class="s"> ?&quot;</span><span class="y">)</span>;</div>
<div class="ln" style="left:0.6px;top:239.70px;">11</div>
<div class="b" style="left:85.3px;top:238.1px;width:86.62px;height:22.6px;background:#232e3b;"></div>
<div class="b" style="left:297.05px;top:239.0px;width:67.38px;height:20px;background:#292929;border-radius:3px;"></div>
<div class="b" style="left:412.55px;top:239.0px;width:48.12px;height:20px;background:#292929;border-radius:3px;"></div>
<div class="b" style="left:470.3px;top:238.1px;width:105.88px;height:22.6px;background:#343a41;"></div>
<div class="code" style="left:85.2px;top:239.70px"><span class="v">$get_info</span>-&gt;<span class="f">bind_param</span><span class="y">(</span><span class="h">types: </span><span class="s">&quot;s&quot;</span>, <span class="h">var: </span><span class="v">$</span><span class="v">document_id</span><span class="y">)</span>;</div>
<div class="ln" style="left:0.6px;top:263.45px;">12</div>
<div class="b" style="left:85.3px;top:261.85px;width:86.62px;height:22.6px;background:#232e3b;"></div>
<div class="code" style="left:85.2px;top:263.45px"><span class="v">$get_info</span>-&gt;<span class="f">execute</span><span class="y">()</span>;</div>
<div class="ln" style="left:0.6px;top:287.20px;">13</div>
<div class="code" style="left:85.2px;top:287.20px"><span class="v">$result_get</span> = <span class="v">$get_info</span>-&gt;<span class="f">get_result</span><span class="y">()</span>;</div>
<div class="ln" style="left:0.6px;top:310.95px;">14</div>
<div class="code" style="left:85.2px;top:310.95px"><span class="c">if</span><span class="y">(</span><span class="v">$result_get</span>-&gt;<span class="v">num_rows</span>&gt;<span class="n">0</span><span class="y">)</span><span class="y">{</span></div>
<div class="ln" style="left:0.6px;top:334.70px;">15</div>
<div class="b" style="left:85.0px;top:332.5px;width:1px;height:23.75px;background:#404040;"></div>
<div class="b" style="left:470.3px;top:334.0px;width:77.0px;height:20px;background:#292929;border-radius:3px;"></div>
<div class="code" style="left:85.2px;top:334.70px">    <span class="c">while</span><span class="p">(</span><span class="v">$row_get</span> = <span class="f">mysqli_fetch_assoc</span><span class="u">(</span><span class="h">result: </span><span class="v">$result_get</span><span class="u">)</span><span class="p">)</span><span class="p">{</span></div>
<div class="ln" style="left:0.6px;top:358.45px;">16</div>
<div class="b" style="left:85.0px;top:356.25px;width:1px;height:23.75px;background:#404040;"></div>
<div class="b" style="left:123.5px;top:356.25px;width:1px;height:23.75px;background:#404040;"></div>
<div class="b" style="left:422.18px;top:357.75px;width:77.0px;height:20px;background:#292929;border-radius:3px;"></div>
<div class="code" style="left:85.2px;top:358.45px">        <span class="v">$status</span> = <span class="f">htmlspecialchars</span><span class="u">(</span><span class="h">string: </span><span class="v">$row_get</span><span class="y">[</span><span class="s">&#x27;status&#x27;</span><span class="y">]</span><span class="u">)</span>;</div>
<div class="ln" style="left:0.6px;top:382.20px;">17</div>
<div class="b" style="left:85.0px;top:380.0px;width:1px;height:23.75px;background:#404040;"></div>
<div class="b" style="left:123.5px;top:380.0px;width:1px;height:23.75px;background:#404040;"></div>
<div class="b" style="left:489.55px;top:381.5px;width:77.0px;height:20px;background:#292929;border-radius:3px;"></div>
<div class="code" style="left:85.2px;top:382.20px">        <span class="v">$document_name</span> = <span class="f">htmlspecialchars</span><span class="u">(</span><span class="h">string: </span><span class="v">$row_get</span><span class="y">[</span><span class="s">&#x27;document_name&#x27;</span><span class="y">]</span><span class="u">)</span>;</div>
<div class="ln" style="left:0.6px;top:405.95px;">18</div>
<div class="b" style="left:85.0px;top:403.75px;width:1px;height:23.75px;background:#404040;"></div>
<div class="code" style="left:85.2px;top:405.95px">    <span class="p">}</span></div>
<div class="ln" style="left:0.6px;top:429.70px;">19</div>
<div class="code" style="left:85.2px;top:429.70px"><span class="y">}</span></div>
<div class="ln" style="left:0.6px;top:453.45px;">20</div>
<div class="code" style="left:85.2px;top:453.45px"><span class="k">?&gt;</span></div>
<div class="ln" style="left:0.6px;top:477.20px;">21</div>
<div class="ln" style="left:0.6px;top:500.95px;">22</div>
<div class="code" style="left:85.2px;top:500.95px"><span class="g">&lt;</span><span class="k">main</span><span class="g">&gt;</span></div>
<div class="ln" style="left:0.6px;top:524.70px;">23</div>
<div class="b" style="left:85.0px;top:522.5px;width:1px;height:23.75px;background:#404040;"></div>
<div class="code" style="left:85.2px;top:524.70px">    <span class="g">&lt;</span><span class="k">section</span> <span class="v">class</span>=<span class="s">&quot;qr-section&quot;</span><span class="g">&gt;</span></div>
<div class="ln" style="left:0.6px;top:548.45px;">24</div>
<div class="b" style="left:85.0px;top:546.25px;width:1px;height:23.75px;background:#404040;"></div>
<div class="b" style="left:123.5px;top:546.25px;width:1px;height:23.75px;background:#404040;"></div>
<div class="code" style="left:85.2px;top:548.45px">        <span class="g">&lt;</span><span class="k">form</span> <span class="v">action</span>=<span class="s">&quot;function.php&quot;</span> <span class="v">method</span>=<span class="s">&quot;POST&quot;</span> <span class="v">enctype</span>=<span class="s">&quot;multipart/form-data&quot;</span><span class="g">&gt;</span></div>
<div class="ln" style="left:0.6px;top:572.20px;">25</div>
<div class="b" style="left:85.0px;top:570.0px;width:1px;height:23.75px;background:#404040;"></div>
<div class="b" style="left:123.5px;top:570.0px;width:1px;height:23.75px;background:#404040;"></div>
<div class="b" style="left:162.0px;top:570.0px;width:1px;height:23.75px;background:#404040;"></div>
<div class="b" style="left:460.68px;top:570.6px;width:105.88px;height:22.6px;background:#343a41;"></div>
<div class="b" style="left:768.67px;top:570.6px;width:105.88px;height:22.6px;background:#343a41;"></div>
<div class="code" style="left:85.2px;top:572.20px">            <span class="g">&lt;</span><span class="k">input</span> <span class="v">type</span>=<span class="s">&quot;hidden&quot;</span> <span class="v">name</span>=<span class="s">&quot;</span><span class="s">document_id</span><span class="s">&quot;</span> <span class="v">value</span>=<span class="s">&quot;</span><span class="k">&lt;?php</span> <span class="f">echo</span> <span class="v">$</span><span class="v">document_id</span>; <span class="k">?&gt;</span><span class="s">&quot;</span><span class="g">&gt;</span></div>
<div class="ln" style="left:0.6px;top:595.95px;">26</div>
<div class="b" style="left:85.0px;top:593.75px;width:1px;height:23.75px;background:#404040;"></div>
<div class="b" style="left:123.5px;top:593.75px;width:1px;height:23.75px;background:#404040;"></div>
<div class="b" style="left:162.0px;top:593.75px;width:1px;height:23.75px;background:#404040;"></div>
<div class="code" style="left:85.2px;top:595.95px">            <span class="m">&lt;!-- Hidden input for QR image --&gt;</span></div>
<div class="ln" style="left:0.6px;top:619.70px;">27</div>
<div class="b" style="left:85.0px;top:617.5px;width:1px;height:23.75px;background:#404040;"></div>
<div class="b" style="left:123.5px;top:617.5px;width:1px;height:23.75px;background:#404040;"></div>
<div class="b" style="left:162.0px;top:617.5px;width:1px;height:23.75px;background:#404040;"></div>
<div class="code" style="left:85.2px;top:619.70px">            <span class="g">&lt;</span><span class="k">input</span> <span class="v">type</span>=<span class="s">&quot;hidden&quot;</span> <span class="v">name</span>=<span class="s">&quot;qr_image&quot;</span> <span class="v">id</span>=<span class="s">&quot;qr_image&quot;</span><span class="g">&gt;</span></div>
<div class="ln" style="left:0.6px;top:643.45px;">28</div>
<div class="b" style="left:85.0px;top:641.25px;width:1px;height:23.75px;background:#404040;"></div>
<div class="b" style="left:123.5px;top:641.25px;width:1px;height:23.75px;background:#404040;"></div>
<div class="b" style="left:162.0px;top:641.25px;width:1px;height:23.75px;background:#404040;"></div>
<div class="ln" style="left:0.6px;top:667.20px;">29</div>
<div class="b" style="left:85.0px;top:665.0px;width:1px;height:23.75px;background:#404040;"></div>
<div class="b" style="left:123.5px;top:665.0px;width:1px;height:23.75px;background:#404040;"></div>
<div class="b" style="left:162.0px;top:665.0px;width:1px;height:23.75px;background:#404040;"></div>
<div class="code" style="left:85.2px;top:667.20px">            <span class="g">&lt;</span><span class="k">div</span> <span class="v">class</span>=<span class="s">&quot;modal fade&quot;</span> <span class="v">id</span>=<span class="s">&quot;modal_system&quot;</span> <span class="v">data-bs-backdrop</span>=<span class="s">&quot;static&quot;</span> <span class="v">data-bs-keyboard</span>=<span class="s">&quot;false&quot;</span> <span class="v">tabindex</span>=<span class="s">&quot;-1&quot;</span> <span class="v">aria-labelledby</span>=<span class="s">&quot;staticBackdropLabel&quot;</span> <span class="v">aria-hidden</span>=<span class="s">&quot;true&quot;</span><span class="g">&gt;</span></div>
<div class="ln" style="left:0.6px;top:690.95px;">30</div>
<div class="b" style="left:85.0px;top:688.75px;width:1px;height:23.75px;background:#404040;"></div>
<div class="b" style="left:123.5px;top:688.75px;width:1px;height:23.75px;background:#404040;"></div>
<div class="b" style="left:162.0px;top:688.75px;width:1px;height:23.75px;background:#404040;"></div>
<div class="b" style="left:200.5px;top:688.75px;width:1px;height:23.75px;background:#404040;"></div>
<div class="code" style="left:85.2px;top:690.95px">                <span class="g">&lt;</span><span class="k">div</span> <span class="v">class</span>=<span class="s">&quot;modal-dialog&quot;</span><span class="g">&gt;</span></div>
<div class="ln" style="left:0.6px;top:714.70px;">31</div>
<div class="b" style="left:85.0px;top:712.5px;width:1px;height:23.75px;background:#404040;"></div>
<div class="b" style="left:123.5px;top:712.5px;width:1px;height:23.75px;background:#404040;"></div>
<div class="b" style="left:162.0px;top:712.5px;width:1px;height:23.75px;background:#404040;"></div>
<div class="b" style="left:200.5px;top:712.5px;width:1px;height:23.75px;background:#404040;"></div>
<div class="b" style="left:239.0px;top:712.5px;width:1px;height:23.75px;background:#404040;"></div>
<div class="code" style="left:85.2px;top:714.70px">                    <span class="g">&lt;</span><span class="k">div</span> <span class="v">class</span>=<span class="s">&quot;modal-content&quot;</span><span class="g">&gt;</span></div>
<div class="ln" style="left:0.6px;top:738.45px;">32</div>
<div class="b" style="left:85.0px;top:736.25px;width:1px;height:23.75px;background:#404040;"></div>
<div class="b" style="left:123.5px;top:736.25px;width:1px;height:23.75px;background:#404040;"></div>
<div class="b" style="left:162.0px;top:736.25px;width:1px;height:23.75px;background:#404040;"></div>
<div class="b" style="left:200.5px;top:736.25px;width:1px;height:23.75px;background:#404040;"></div>
<div class="b" style="left:239.0px;top:736.25px;width:1px;height:23.75px;background:#404040;"></div>
<div class="b" style="left:277.5px;top:736.25px;width:1px;height:23.75px;background:#404040;"></div>
<div class="code" style="left:85.2px;top:738.45px">                        <span class="g">&lt;</span><span class="k">div</span> <span class="v">class</span>=<span class="s">&quot;modal-header  border-0&quot;</span><span class="g">&gt;</span></div>
<div class="ln" style="left:0.6px;top:762.20px;">33</div>
<div class="b" style="left:85.0px;top:760.0px;width:1px;height:23.75px;background:#404040;"></div>
<div class="b" style="left:123.5px;top:760.0px;width:1px;height:23.75px;background:#404040;"></div>
<div class="b" style="left:162.0px;top:760.0px;width:1px;height:23.75px;background:#404040;"></div>
<div class="b" style="left:200.5px;top:760.0px;width:1px;height:23.75px;background:#404040;"></div>
<div class="b" style="left:239.0px;top:760.0px;width:1px;height:23.75px;background:#404040;"></div>
<div class="b" style="left:277.5px;top:760.0px;width:1px;height:23.75px;background:#404040;"></div>
<div class="b" style="left:316.0px;top:760.0px;width:1px;height:23.75px;background:#404040;"></div>
<div class="code" style="left:85.2px;top:762.20px">                            <span class="g">&lt;</span><span class="k">button</span> <span class="v">type</span>=<span class="s">&quot;button&quot;</span> <span class="v">onclick</span>=<span class="s">&quot;location.href=&#x27;track.php&#x27;;&quot;</span> <span class="v">class</span>=<span class="s">&quot;btn-close bg-light&quot;</span> <span class="v">data-bs-dismiss</span>=<span class="s">&quot;modal&quot;</span> <span class="v">aria-label</span>=<span class="s">&quot;Close&quot;</span><span class="g">&gt;</span></div>
<div class="ln" style="left:0.6px;top:785.95px;">34</div>
<div class="b" style="left:85.0px;top:783.75px;width:1px;height:23.75px;background:#404040;"></div>
<div class="b" style="left:123.5px;top:783.75px;width:1px;height:23.75px;background:#404040;"></div>
<div class="b" style="left:162.0px;top:783.75px;width:1px;height:23.75px;background:#404040;"></div>
<div class="b" style="left:200.5px;top:783.75px;width:1px;height:23.75px;background:#404040;"></div>
<div class="b" style="left:239.0px;top:783.75px;width:1px;height:23.75px;background:#404040;"></div>
<div class="b" style="left:277.5px;top:783.75px;width:1px;height:23.75px;background:#404040;"></div>
<div class="code" style="left:85.2px;top:785.95px">                        <span class="g">&lt;/</span><span class="k">div</span><span class="g">&gt;</span></div>
<div class="ln" style="left:0.6px;top:809.70px;">35</div>
<div class="b" style="left:85.0px;top:807.5px;width:1px;height:23.75px;background:#404040;"></div>
<div class="b" style="left:123.5px;top:807.5px;width:1px;height:23.75px;background:#404040;"></div>
<div class="b" style="left:162.0px;top:807.5px;width:1px;height:23.75px;background:#404040;"></div>
<div class="b" style="left:200.5px;top:807.5px;width:1px;height:23.75px;background:#404040;"></div>
<div class="b" style="left:239.0px;top:807.5px;width:1px;height:23.75px;background:#404040;"></div>
<div class="b" style="left:277.5px;top:807.5px;width:1px;height:23.75px;background:#404040;"></div>
<div class="code" style="left:85.2px;top:809.70px">                        <span class="g">&lt;</span><span class="k">div</span> <span class="v">class</span>=<span class="s">&quot;modal-body d-flex justify-content-center&quot;</span><span class="g">&gt;</span></div>
<div class="ln" style="left:0.6px;top:833.45px;">36</div>
<div class="b" style="left:85.0px;top:831.25px;width:1px;height:23.75px;background:#404040;"></div>
<div class="b" style="left:123.5px;top:831.25px;width:1px;height:23.75px;background:#404040;"></div>
<div class="b" style="left:162.0px;top:831.25px;width:1px;height:23.75px;background:#404040;"></div>
<div class="b" style="left:200.5px;top:831.25px;width:1px;height:23.75px;background:#404040;"></div>
<div class="b" style="left:239.0px;top:831.25px;width:1px;height:23.75px;background:#404040;"></div>
<div class="b" style="left:277.5px;top:831.25px;width:1px;height:23.75px;background:#404040;"></div>
<div class="b" style="left:316.0px;top:831.25px;width:1px;height:23.75px;background:#404040;"></div>
<div class="code" style="left:85.2px;top:833.45px">                              <span class="g">&lt;</span><span class="k">div</span> <span class="v">id</span>=<span class="s">&quot;qrcode&quot;</span> <span class="v">class</span>=<span class="s">&quot;w-100&quot;</span><span class="g">&gt;&lt;/</span><span class="k">div</span><span class="g">&gt;</span></div>
<div class="ln" style="left:0.6px;top:857.20px;">37</div>
<div class="b" style="left:85.0px;top:855.0px;width:1px;height:23.75px;background:#404040;"></div>
<div class="b" style="left:123.5px;top:855.0px;width:1px;height:23.75px;background:#404040;"></div>
<div class="b" style="left:162.0px;top:855.0px;width:1px;height:23.75px;background:#404040;"></div>
<div class="b" style="left:200.5px;top:855.0px;width:1px;height:23.75px;background:#404040;"></div>
<div class="b" style="left:239.0px;top:855.0px;width:1px;height:23.75px;background:#404040;"></div>
<div class="b" style="left:277.5px;top:855.0px;width:1px;height:23.75px;background:#404040;"></div>
<div class="code" style="left:85.2px;top:857.20px">                        <span class="g">&lt;/</span><span class="k">div</span><span class="g">&gt;</span></div>
</div>
<svg style="left:361px;top:329px" width="14" height="19" viewBox="0 0 14 19"><circle cx="7" cy="6.9" r="6.1" fill="#ffcc00"/><path d="M4.1 10.6 H9.9 V17.6 Q9.9 18 9.5 18 H4.5 Q4.1 18 4.1 17.6 Z" fill="#ffcc00"/><rect x="6" y="13.3" width="2" height="2.5" fill="#1f1f1f"/></svg>
<div class="b" style="left:440px;top:339.6px;width:448.3px;height:36px;background:#202020;border:1px solid #454545;border-radius:4px;box-shadow:0 2px 8px rgba(0,0,0,.36)"></div>
<div class="code" style="left:451px;top:348px"><span style="color:#d4d4d4">(</span><span class="k">global</span> variable) <span class="k">bool</span>|mysqli_stmt <span class="v">$get_info</span></div>
<div class="b" style="left:1779px;top:115px;width:4px;height:878px;background:linear-gradient(to right,rgba(0,0,0,0),rgba(0,0,0,.35));"></div>
<div class="b" style="left:1783px;top:115px;width:120px;height:878px;background:#1f1f1f;"></div>
<div class="b" style="left:1903px;top:115px;width:1px;height:878px;background:#171717;"></div>
<div class="b" style="left:1903px;top:115px;width:17px;height:290.8px;background:#434343;"></div>
<div class="b" style="left:1904px;top:185.3px;width:16px;height:2px;background:#a0a0a0;"></div>
<div class="b" style="left:440px;top:978.5px;width:1044px;height:14px;background:rgba(121,121,121,.4);"></div>
<svg style="left:1791.0px;top:115.85px;opacity:.5" width="112" height="160" viewBox="0 0 112 160"><rect x="0.0" y="0.00" width="5.0" height="1.2" fill="#569cd6"/><rect x="0.0" y="2.00" width="7.0" height="1.2" fill="#c586c0"/><rect x="8.0" y="2.00" width="11.0" height="1.2" fill="#ce9178"/><rect x="19.0" y="2.00" width="1.0" height="1.2" fill="#d4d4d4"/><rect x="0.0" y="4.00" width="2.0" height="1.2" fill="#c586c0"/><rect x="2.0" y="4.00" width="1.0" height="1.2" fill="#ffd700"/><rect x="3.0" y="4.00" width="5.0" height="1.2" fill="#dcdcaa"/><rect x="8.0" y="4.00" width="1.0" height="1.2" fill="#da70d6"/><rect x="9.0" y="4.00" width="5.0" height="1.2" fill="#9cdcfe"/><rect x="14.0" y="4.00" width="1.0" height="1.2" fill="#179fff"/><rect x="15.0" y="4.00" width="13.0" height="1.2" fill="#ce9178"/><rect x="28.0" y="4.00" width="1.0" height="1.2" fill="#179fff"/><rect x="29.0" y="4.00" width="1.0" height="1.2" fill="#da70d6"/><rect x="30.0" y="4.00" width="2.0" height="1.2" fill="#ffd700"/><rect x="4.0" y="6.00" width="12.0" height="1.2" fill="#9cdcfe"/><rect x="17.0" y="6.00" width="1.0" height="1.2" fill="#d4d4d4"/><rect x="19.0" y="6.00" width="5.0" height="1.2" fill="#9cdcfe"/><rect x="24.0" y="6.00" width="1.0" height="1.2" fill="#da70d6"/><rect x="25.0" y="6.00" width="13.0" height="1.2" fill="#ce9178"/><rect x="38.0" y="6.00" width="1.0" height="1.2" fill="#da70d6"/><rect x="40.0" y="6.00" width="2.0" height="1.2" fill="#d4d4d4"/><rect x="43.0" y="6.00" width="2.0" height="1.2" fill="#ce9178"/><rect x="45.0" y="6.00" width="1.0" height="1.2" fill="#d4d4d4"/><rect x="0.0" y="8.00" width="1.0" height="1.2" fill="#ffd700"/><rect x="0.0" y="16.00" width="7.0" height="1.2" fill="#9cdcfe"/><rect x="8.0" y="16.00" width="1.0" height="1.2" fill="#d4d4d4"/><rect x="10.0" y="16.00" width="2.0" height="1.2" fill="#ce9178"/><rect x="12.0" y="16.00" width="1.0" height="1.2" fill="#d4d4d4"/><rect x="0.0" y="18.00" width="9.0" height="1.2" fill="#9cdcfe"/><rect x="10.0" y="18.00" width="1.0" height="1.2" fill="#d4d4d4"/><rect x="12.0" y="18.00" width="5.0" height="1.2" fill="#9cdcfe"/><rect x="17.0" y="18.00" width="2.0" height="1.2" fill="#d4d4d4"/><rect x="19.0" y="18.00" width="7.0" height="1.2" fill="#dcdcaa"/><rect x="26.0" y="18.00" width="1.0" height="1.2" fill="#ffd700"/><rect x="27.0" y="18.00" width="1.0" height="1.2" fill="#ce9178"/><rect x="28.0" y="18.00" width="6.0" height="1.2" fill="#569cd6"/><rect x="35.0" y="18.00" width="1.0" height="1.2" fill="#d4d4d4"/><rect x="37.0" y="18.00" width="4.0" height="1.2" fill="#569cd6"/><rect x="42.0" y="18.00" width="11.0" height="1.2" fill="#ce9178"/><rect x="54.0" y="18.00" width="5.0" height="1.2" fill="#569cd6"/><rect x="60.0" y="18.00" width="13.0" height="1.2" fill="#ce9178"/><rect x="74.0" y="18.00" width="1.0" height="1.2" fill="#d4d4d4"/><rect x="76.0" y="18.00" width="2.0" height="1.2" fill="#ce9178"/><rect x="78.0" y="18.00" width="1.0" height="1.2" fill="#ffd700"/><rect x="79.0" y="18.00" width="1.0" height="1.2" fill="#d4d4d4"/><rect x="0.0" y="20.00" width="9.0" height="1.2" fill="#9cdcfe"/><rect x="9.0" y="20.00" width="2.0" height="1.2" fill="#d4d4d4"/><rect x="11.0" y="20.00" width="10.0" height="1.2" fill="#dcdcaa"/><rect x="21.0" y="20.00" width="1.0" height="1.2" fill="#ffd700"/><rect x="22.0" y="20.00" width="3.0" height="1.2" fill="#ce9178"/><rect x="25.0" y="20.00" width="1.0" height="1.2" fill="#d4d4d4"/><rect x="27.0" y="20.00" width="12.0" height="1.2" fill="#9cdcfe"/><rect x="39.0" y="20.00" width="1.0" height="1.2" fill="#ffd700"/><rect x="40.0" y="20.00" width="1.0" height="1.2" fill="#d4d4d4"/><rect x="0.0" y="22.00" width="9.0" height="1.2" fill="#9cdcfe"/><rect x="9.0" y="22.00" width="2.0" height="1.2" fill="#d4d4d4"/><rect x="11.0" y="22.00" width="7.0" height="1.2" fill="#dcdcaa"/><rect x="18.0" y="22.00" width="2.0" height="1.2" fill="#ffd700"/><rect x="20.0" y="22.00" width="1.0" height="1.2" fill="#d4d4d4"/><rect x="0.0" y="24.00" width="11.0" height="1.2" fill="#9cdcfe"/><rect x="12.0" y="24.00" width="1.0" height="1.2" fill="#d4d4d4"/><rect x="14.0" y="24.00" width="9.0" height="1.2" fill="#9cdcfe"/><rect x="23.0" y="24.00" width="2.0" height="1.2" fill="#d4d4d4"/><rect x="25.0" y="24.00" width="10.0" height="1.2" fill="#dcdcaa"/><rect x="35.0" y="24.00" width="2.0" height="1.2" fill="#ffd700"/><rect x="37.0" y="24.00" width="1.0" height="1.2" fill="#d4d4d4"/><rect x="0.0" y="26.00" width="2.0" height="1.2" fill="#c586c0"/><rect x="2.0" y="26.00" width="1.0" height="1.2" fill="#ffd700"/><rect x="3.0" y="26.00" width="11.0" height="1.2" fill="#9cdcfe"/><rect x="14.0" y="26.00" width="2.0" height="1.2" fill="#d4d4d4"/><rect x="16.0" y="26.00" width="8.0" height="1.2" fill="#9cdcfe"/><rect x="24.0" y="26.00" width="1.0" height="1.2" fill="#d4d4d4"/><rect x="25.0" y="26.00" width="1.0" height="1.2" fill="#b5cea8"/><rect x="26.0" y="26.00" width="2.0" height="1.2" fill="#ffd700"/><rect x="4.0" y="28.00" width="5.0" height="1.2" fill="#c586c0"/><rect x="9.0" y="28.00" width="1.0" height="1.2" fill="#da70d6"/><rect x="10.0" y="28.00" width="8.0" height="1.2" fill="#9cdcfe"/><rect x="19.0" y="28.00" width="1.0" height="1.2" fill="#d4d4d4"/><rect x="21.0" y="28.00" width="18.0" height="1.2" fill="#dcdcaa"/><rect x="39.0" y="28.00" width="1.0" height="1.2" fill="#179fff"/><rect x="40.0" y="28.00" width="11.0" height="1.2" fill="#9cdcfe"/><rect x="51.0" y="28.00" width="1.0" height="1.2" fill="#179fff"/><rect x="52.0" y="28.00" width="2.0" height="1.2" fill="#da70d6"/><rect x="8.0" y="30.00" width="7.0" height="1.2" fill="#9cdcfe"/><rect x="16.0" y="30.00" width="1.0" height="1.2" fill="#d4d4d4"/><rect x="18.0" y="30.00" width="16.0" height="1.2" fill="#dcdcaa"/><rect x="34.0" y="30.00" width="1.0" height="1.2" fill="#179fff"/><rect x="35.0" y="30.00" width="8.0" height="1.2" fill="#9cdcfe"/><rect x="43.0" y="30.00" width="1.0" height="1.2" fill="#ffd700"/><rect x="44.0" y="30.00" width="8.0" height="1.2" fill="#ce9178"/><rect x="52.0" y="30.00" width="1.0" height="1.2" fill="#ffd700"/><rect x="53.0" y="30.00" width="1.0" height="1.2" fill="#179fff"/><rect x="54.0" y="30.00" width="1.0" height="1.2" fill="#d4d4d4"/><rect x="8.0" y="32.00" width="14.0" height="1.2" fill="#9cdcfe"/><rect x="23.0" y="32.00" width="1.0" height="1.2" fill="#d4d4d4"/><rect x="25.0" y="32.00" width="16.0" height="1.2" fill="#dcdcaa"/><rect x="41.0" y="32.00" width="1.0" height="1.2" fill="#179fff"/><rect x="42.0" y="32.00" width="8.0" height="1.2" fill="#9cdcfe"/><rect x="50.0" y="32.00" width="1.0" height="1.2" fill="#ffd700"/><rect x="51.0" y="32.00" width="15.0" height="1.2" fill="#ce9178"/><rect x="66.0" y="32.00" width="1.0" height="1.2" fill="#ffd700"/><rect x="67.0" y="32.00" width="1.0" height="1.2" fill="#179fff"/><rect x="68.0" y="32.00" width="1.0" height="1.2" fill="#d4d4d4"/><rect x="4.0" y="34.00" width="1.0" height="1.2" fill="#da70d6"/><rect x="0.0" y="36.00" width="1.0" height="1.2" fill="#ffd700"/><rect x="0.0" y="38.00" width="2.0" height="1.2" fill="#569cd6"/><rect x="0.0" y="42.00" width="1.0" height="1.2" fill="#808080"/><rect x="1.0" y="42.00" width="4.0" height="1.2" fill="#569cd6"/><rect x="5.0" y="42.00" width="1.0" height="1.2" fill="#808080"/><rect x="4.0" y="44.00" width="1.0" height="1.2" fill="#808080"/><rect x="5.0" y="44.00" width="7.0" height="1.2" fill="#569cd6"/><rect x="13.0" y="44.00" width="5.0" height="1.2" fill="#9cdcfe"/><rect x="18.0" y="44.00" width="1.0" height="1.2" fill="#d4d4d4"/><rect x="19.0" y="44.00" width="12.0" height="1.2" fill="#ce9178"/><rect x="31.0" y="44.00" width="1.0" height="1.2" fill="#808080"/><rect x="8.0" y="46.00" width="1.0" height="1.2" fill="#808080"/><rect x="9.0" y="46.00" width="4.0" height="1.2" fill="#569cd6"/><rect x="14.0" y="46.00" width="6.0" height="1.2" fill="#9cdcfe"/><rect x="20.0" y="46.00" width="1.0" height="1.2" fill="#d4d4d4"/><rect x="21.0" y="46.00" width="14.0" height="1.2" fill="#ce9178"/><rect x="36.0" y="46.00" width="6.0" height="1.2" fill="#9cdcfe"/><rect x="42.0" y="46.00" width="1.0" height="1.2" fill="#d4d4d4"/><rect x="43.0" y="46.00" width="6.0" height="1.2" fill="#ce9178"/><rect x="50.0" y="46.00" width="7.0" height="1.2" fill="#9cdcfe"/><rect x="57.0" y="46.00" width="1.0" height="1.2" fill="#d4d4d4"/><rect x="58.0" y="46.00" width="21.0" height="1.2" fill="#ce9178"/><rect x="79.0" y="46.00" width="1.0" height="1.2" fill="#808080"/><rect x="12.0" y="48.00" width="1.0" height="1.2" fill="#808080"/><rect x="13.0" y="48.00" width="5.0" height="1.2" fill="#569cd6"/><rect x="19.0" y="48.00" width="4.0" height="1.2" fill="#9cdcfe"/><rect x="23.0" y="48.00" width="1.0" height="1.2" fill="#d4d4d4"/><rect x="24.0" y="48.00" width="8.0" height="1.2" fill="#ce9178"/><rect x="33.0" y="48.00" width="4.0" height="1.2" fill="#9cdcfe"/><rect x="37.0" y="48.00" width="1.0" height="1.2" fill="#d4d4d4"/><rect x="38.0" y="48.00" width="13.0" height="1.2" fill="#ce9178"/><rect x="52.0" y="48.00" width="5.0" height="1.2" fill="#9cdcfe"/><rect x="57.0" y="48.00" width="1.0" height="1.2" fill="#d4d4d4"/><rect x="58.0" y="48.00" width="1.0" height="1.2" fill="#ce9178"/><rect x="59.0" y="48.00" width="5.0" height="1.2" fill="#569cd6"/><rect x="65.0" y="48.00" width="4.0" height="1.2" fill="#dcdcaa"/><rect x="70.0" y="48.00" width="12.0" height="1.2" fill="#9cdcfe"/><rect x="82.0" y="48.00" width="1.0" height="1.2" fill="#d4d4d4"/><rect x="84.0" y="48.00" width="2.0" height="1.2" fill="#569cd6"/><rect x="86.0" y="48.00" width="1.0" height="1.2" fill="#ce9178"/><rect x="87.0" y="48.00" width="1.0" height="1.2" fill="#808080"/><rect x="12.0" y="50.00" width="4.0" height="1.2" fill="#6a9955"/><rect x="17.0" y="50.00" width="6.0" height="1.2" fill="#6a9955"/><rect x="24.0" y="50.00" width="5.0" height="1.2" fill="#6a9955"/><rect x="30.0" y="50.00" width="3.0" height="1.2" fill="#6a9955"/><rect x="34.0" y="50.00" width="2.0" height="1.2" fill="#6a9955"/><rect x="37.0" y="50.00" width="5.0" height="1.2" fill="#6a9955"/><rect x="43.0" y="50.00" width="3.0" height="1.2" fill="#6a9955"/><rect x="12.0" y="52.00" width="1.0" height="1.2" fill="#808080"/><rect x="13.0" y="52.00" width="5.0" height="1.2" fill="#569cd6"/><rect x="19.0" y="52.00" width="4.0" height="1.2" fill="#9cdcfe"/><rect x="23.0" y="52.00" width="1.0" height="1.2" fill="#d4d4d4"/><rect x="24.0" y="52.00" width="8.0" height="1.2" fill="#ce9178"/><rect x="33.0" y="52.00" width="4.0" height="1.2" fill="#9cdcfe"/><rect x="37.0" y="52.00" width="1.0" height="1.2" fill="#d4d4d4"/><rect x="38.0" y="52.00" width="10.0" height="1.2" fill="#ce9178"/><rect x="49.0" y="52.00" width="2.0" height="1.2" fill="#9cdcfe"/><rect x="51.0" y="52.00" width="1.0" height="1.2" fill="#d4d4d4"/><rect x="52.0" y="52.00" width="10.0" height="1.2" fill="#ce9178"/><rect x="62.0" y="52.00" width="1.0" height="1.2" fill="#808080"/><rect x="12.0" y="56.00" width="1.0" height="1.2" fill="#808080"/><rect x="13.0" y="56.00" width="3.0" height="1.2" fill="#569cd6"/><rect x="17.0" y="56.00" width="5.0" height="1.2" fill="#9cdcfe"/><rect x="22.0" y="56.00" width="1.0" height="1.2" fill="#d4d4d4"/><rect x="23.0" y="56.00" width="6.0" height="1.2" fill="#ce9178"/><rect x="30.0" y="56.00" width="5.0" height="1.2" fill="#ce9178"/><rect x="36.0" y="56.00" width="2.0" height="1.2" fill="#9cdcfe"/><rect x="38.0" y="56.00" width="1.0" height="1.2" fill="#d4d4d4"/><rect x="39.0" y="56.00" width="14.0" height="1.2" fill="#ce9178"/><rect x="54.0" y="56.00" width="16.0" height="1.2" fill="#9cdcfe"/><rect x="70.0" y="56.00" width="1.0" height="1.2" fill="#d4d4d4"/><rect x="71.0" y="56.00" width="8.0" height="1.2" fill="#ce9178"/><rect x="80.0" y="56.00" width="16.0" height="1.2" fill="#9cdcfe"/><rect x="96.0" y="56.00" width="1.0" height="1.2" fill="#d4d4d4"/><rect x="97.0" y="56.00" width="7.0" height="1.2" fill="#ce9178"/><rect x="105.0" y="56.00" width="7.0" height="1.2" fill="#9cdcfe"/><rect x="16.0" y="58.00" width="1.0" height="1.2" fill="#808080"/><rect x="17.0" y="58.00" width="3.0" height="1.2" fill="#569cd6"/><rect x="21.0" y="58.00" width="5.0" height="1.2" fill="#9cdcfe"/><rect x="26.0" y="58.00" width="1.0" height="1.2" fill="#d4d4d4"/><rect x="27.0" y="58.00" width="14.0" height="1.2" fill="#ce9178"/><rect x="41.0" y="58.00" width="1.0" height="1.2" fill="#808080"/><rect x="20.0" y="60.00" width="1.0" height="1.2" fill="#808080"/><rect x="21.0" y="60.00" width="3.0" height="1.2" fill="#569cd6"/><rect x="25.0" y="60.00" width="5.0" height="1.2" fill="#9cdcfe"/><rect x="30.0" y="60.00" width="1.0" height="1.2" fill="#d4d4d4"/><rect x="31.0" y="60.00" width="15.0" height="1.2" fill="#ce9178"/><rect x="46.0" y="60.00" width="1.0" height="1.2" fill="#808080"/><rect x="24.0" y="62.00" width="1.0" height="1.2" fill="#808080"/><rect x="25.0" y="62.00" width="3.0" height="1.2" fill="#569cd6"/><rect x="29.0" y="62.00" width="5.0" height="1.2" fill="#9cdcfe"/><rect x="34.0" y="62.00" width="1.0" height="1.2" fill="#d4d4d4"/><rect x="35.0" y="62.00" width="13.0" height="1.2" fill="#ce9178"/><rect x="50.0" y="62.00" width="9.0" height="1.2" fill="#ce9178"/><rect x="59.0" y="62.00" width="1.0" height="1.2" fill="#808080"/><rect x="28.0" y="64.00" width="1.0" height="1.2" fill="#808080"/><rect x="29.0" y="64.00" width="6.0" height="1.2" fill="#569cd6"/><rect x="36.0" y="64.00" width="4.0" height="1.2" fill="#9cdcfe"/><rect x="40.0" y="64.00" width="1.0" height="1.2" fill="#d4d4d4"/><rect x="41.0" y="64.00" width="8.0" height="1.2" fill="#ce9178"/><rect x="50.0" y="64.00" width="7.0" height="1.2" fill="#9cdcfe"/><rect x="57.0" y="64.00" width="1.0" height="1.2" fill="#d4d4d4"/><rect x="58.0" y="64.00" width="28.0" height="1.2" fill="#ce9178"/><rect x="87.0" y="64.00" width="5.0" height="1.2" fill="#9cdcfe"/><rect x="92.0" y="64.00" width="1.0" height="1.2" fill="#d4d4d4"/><rect x="93.0" y="64.00" width="10.0" height="1.2" fill="#ce9178"/><rect x="104.0" y="64.00" width="8.0" height="1.2" fill="#ce9178"/><rect x="24.0" y="66.00" width="2.0" height="1.2" fill="#808080"/><rect x="26.0" y="66.00" width="3.0" height="1.2" fill="#569cd6"/><rect x="29.0" y="66.00" width="1.0" height="1.2" fill="#808080"/><rect x="24.0" y="68.00" width="1.0" height="1.2" fill="#808080"/><rect x="25.0" y="68.00" width="3.0" height="1.2" fill="#569cd6"/><rect x="29.0" y="68.00" width="5.0" height="1.2" fill="#9cdcfe"/><rect x="34.0" y="68.00" width="1.0" height="1.2" fill="#d4d4d4"/><rect x="35.0" y="68.00" width="11.0" height="1.2" fill="#ce9178"/><rect x="47.0" y="68.00" width="6.0" height="1.2" fill="#ce9178"/><rect x="54.0" y="68.00" width="23.0" height="1.2" fill="#ce9178"/><rect x="77.0" y="68.00" width="1.0" height="1.2" fill="#808080"/><rect x="30.0" y="70.00" width="1.0" height="1.2" fill="#808080"/><rect x="31.0" y="70.00" width="3.0" height="1.2" fill="#569cd6"/><rect x="35.0" y="70.00" width="2.0" height="1.2" fill="#9cdcfe"/><rect x="37.0" y="70.00" width="1.0" height="1.2" fill="#d4d4d4"/><rect x="38.0" y="70.00" width="8.0" height="1.2" fill="#ce9178"/><rect x="47.0" y="70.00" width="5.0" height="1.2" fill="#9cdcfe"/><rect x="52.0" y="70.00" width="1.0" height="1.2" fill="#d4d4d4"/><rect x="53.0" y="70.00" width="7.0" height="1.2" fill="#ce9178"/><rect x="60.0" y="70.00" width="3.0" height="1.2" fill="#808080"/><rect x="63.0" y="70.00" width="3.0" height="1.2" fill="#569cd6"/><rect x="66.0" y="70.00" width="1.0" height="1.2" fill="#808080"/><rect x="24.0" y="72.00" width="2.0" height="1.2" fill="#808080"/><rect x="26.0" y="72.00" width="3.0" height="1.2" fill="#569cd6"/><rect x="29.0" y="72.00" width="1.0" height="1.2" fill="#808080"/><rect x="20.0" y="74.00" width="2.0" height="1.2" fill="#808080"/><rect x="22.0" y="74.00" width="3.0" height="1.2" fill="#569cd6"/><rect x="25.0" y="74.00" width="1.0" height="1.2" fill="#808080"/><rect x="16.0" y="76.00" width="2.0" height="1.2" fill="#808080"/><rect x="18.0" y="76.00" width="3.0" height="1.2" fill="#569cd6"/><rect x="21.0" y="76.00" width="1.0" height="1.2" fill="#808080"/><rect x="12.0" y="78.00" width="2.0" height="1.2" fill="#808080"/><rect x="14.0" y="78.00" width="3.0" height="1.2" fill="#569cd6"/><rect x="17.0" y="78.00" width="1.0" height="1.2" fill="#808080"/><rect x="8.0" y="80.00" width="2.0" height="1.2" fill="#808080"/><rect x="10.0" y="80.00" width="4.0" height="1.2" fill="#569cd6"/><rect x="14.0" y="80.00" width="1.0" height="1.2" fill="#808080"/><rect x="4.0" y="82.00" width="2.0" height="1.2" fill="#808080"/><rect x="6.0" y="82.00" width="7.0" height="1.2" fill="#569cd6"/><rect x="13.0" y="82.00" width="1.0" height="1.2" fill="#808080"/><rect x="0.0" y="84.00" width="2.0" height="1.2" fill="#808080"/><rect x="2.0" y="84.00" width="4.0" height="1.2" fill="#569cd6"/><rect x="6.0" y="84.00" width="1.0" height="1.2" fill="#808080"/><rect x="0.0" y="88.00" width="4.0" height="1.2" fill="#6a9955"/><rect x="5.0" y="88.00" width="9.0" height="1.2" fill="#6a9955"/><rect x="15.0" y="88.00" width="3.0" height="1.2" fill="#6a9955"/><rect x="0.0" y="90.00" width="1.0" height="1.2" fill="#808080"/><rect x="1.0" y="90.00" width="6.0" height="1.2" fill="#569cd6"/><rect x="8.0" y="90.00" width="3.0" height="1.2" fill="#9cdcfe"/><rect x="11.0" y="90.00" width="1.0" height="1.2" fill="#d4d4d4"/><rect x="12.0" y="90.00" width="59.0" height="1.2" fill="#ce9178"/><rect x="71.0" y="90.00" width="3.0" height="1.2" fill="#808080"/><rect x="74.0" y="90.00" width="6.0" height="1.2" fill="#569cd6"/><rect x="80.0" y="90.00" width="1.0" height="1.2" fill="#808080"/><rect x="0.0" y="92.00" width="1.0" height="1.2" fill="#808080"/><rect x="1.0" y="92.00" width="6.0" height="1.2" fill="#569cd6"/><rect x="7.0" y="92.00" width="1.0" height="1.2" fill="#808080"/><rect x="4.0" y="94.00" width="8.0" height="1.2" fill="#9cdcfe"/><rect x="12.0" y="94.00" width="1.0" height="1.2" fill="#d4d4d4"/><rect x="13.0" y="94.00" width="16.0" height="1.2" fill="#dcdcaa"/><rect x="29.0" y="94.00" width="1.0" height="1.2" fill="#ffd700"/><rect x="30.0" y="94.00" width="18.0" height="1.2" fill="#ce9178"/><rect x="48.0" y="94.00" width="1.0" height="1.2" fill="#d4d4d4"/><rect x="50.0" y="94.00" width="8.0" height="1.2" fill="#569cd6"/><rect x="58.0" y="94.00" width="2.0" height="1.2" fill="#da70d6"/><rect x="61.0" y="94.00" width="1.0" height="1.2" fill="#da70d6"/><rect x="4.0" y="96.00" width="3.0" height="1.2" fill="#569cd6"/><rect x="8.0" y="96.00" width="10.0" height="1.2" fill="#9cdcfe"/><rect x="19.0" y="96.00" width="1.0" height="1.2" fill="#d4d4d4"/><rect x="21.0" y="96.00" width="1.0" height="1.2" fill="#ce9178"/><rect x="22.0" y="96.00" width="5.0" height="1.2" fill="#569cd6"/><rect x="28.0" y="96.00" width="4.0" height="1.2" fill="#dcdcaa"/><rect x="33.0" y="96.00" width="12.0" height="1.2" fill="#9cdcfe"/><rect x="45.0" y="96.00" width="1.0" height="1.2" fill="#d4d4d4"/><rect x="47.0" y="96.00" width="2.0" height="1.2" fill="#569cd6"/><rect x="49.0" y="96.00" width="1.0" height="1.2" fill="#ce9178"/><rect x="50.0" y="96.00" width="1.0" height="1.2" fill="#d4d4d4"/><rect x="53.0" y="96.00" width="2.0" height="1.2" fill="#6a9955"/><rect x="56.0" y="96.00" width="8.0" height="1.2" fill="#6a9955"/><rect x="65.0" y="96.00" width="2.0" height="1.2" fill="#6a9955"/><rect x="68.0" y="96.00" width="5.0" height="1.2" fill="#6a9955"/><rect x="4.0" y="98.00" width="3.0" height="1.2" fill="#569cd6"/><rect x="8.0" y="98.00" width="9.0" height="1.2" fill="#9cdcfe"/><rect x="18.0" y="98.00" width="1.0" height="1.2" fill="#d4d4d4"/><rect x="20.0" y="98.00" width="1.0" height="1.2" fill="#ce9178"/><rect x="21.0" y="98.00" width="5.0" height="1.2" fill="#569cd6"/><rect x="27.0" y="98.00" width="4.0" height="1.2" fill="#dcdcaa"/><rect x="32.0" y="98.00" width="7.0" height="1.2" fill="#9cdcfe"/><rect x="39.0" y="98.00" width="1.0" height="1.2" fill="#d4d4d4"/><rect x="41.0" y="98.00" width="2.0" height="1.2" fill="#569cd6"/><rect x="43.0" y="98.00" width="1.0" height="1.2" fill="#ce9178"/><rect x="44.0" y="98.00" width="1.0" height="1.2" fill="#d4d4d4"/><rect x="4.0" y="100.00" width="3.0" height="1.2" fill="#569cd6"/><rect x="8.0" y="100.00" width="7.0" height="1.2" fill="#9cdcfe"/><rect x="16.0" y="100.00" width="1.0" height="1.2" fill="#d4d4d4"/><rect x="18.0" y="100.00" width="1.0" height="1.2" fill="#ce9178"/><rect x="19.0" y="100.00" width="5.0" height="1.2" fill="#569cd6"/><rect x="25.0" y="100.00" width="4.0" height="1.2" fill="#dcdcaa"/><rect x="30.0" y="100.00" width="14.0" height="1.2" fill="#9cdcfe"/><rect x="44.0" y="100.00" width="1.0" height="1.2" fill="#d4d4d4"/><rect x="46.0" y="100.00" width="2.0" height="1.2" fill="#569cd6"/><rect x="48.0" y="100.00" width="1.0" height="1.2" fill="#ce9178"/><rect x="49.0" y="100.00" width="1.0" height="1.2" fill="#d4d4d4"/><rect x="4.0" y="104.00" width="8.0" height="1.2" fill="#569cd6"/><rect x="13.0" y="104.00" width="10.0" height="1.2" fill="#dcdcaa"/><rect x="23.0" y="104.00" width="2.0" height="1.2" fill="#da70d6"/><rect x="26.0" y="104.00" width="1.0" height="1.2" fill="#da70d6"/><rect x="8.0" y="106.00" width="3.0" height="1.2" fill="#569cd6"/><rect x="12.0" y="106.00" width="6.0" height="1.2" fill="#9cdcfe"/><rect x="19.0" y="106.00" width="1.0" height="1.2" fill="#d4d4d4"/><rect x="21.0" y="106.00" width="3.0" height="1.2" fill="#569cd6"/><rect x="25.0" y="106.00" width="6.0" height="1.2" fill="#dcdcaa"/><rect x="31.0" y="106.00" width="1.0" height="1.2" fill="#179fff"/><rect x="32.0" y="106.00" width="5.0" height="1.2" fill="#9cdcfe"/><rect x="37.0" y="106.00" width="1.0" height="1.2" fill="#d4d4d4"/><rect x="39.0" y="106.00" width="1.0" height="1.2" fill="#ffd700"/><rect x="12.0" y="108.00" width="4.0" height="1.2" fill="#9cdcfe"/><rect x="16.0" y="108.00" width="1.0" height="1.2" fill="#d4d4d4"/><rect x="18.0" y="108.00" width="10.0" height="1.2" fill="#9cdcfe"/><rect x="28.0" y="108.00" width="1.0" height="1.2" fill="#d4d4d4"/><rect x="30.0" y="108.00" width="5.0" height="1.2" fill="#9cdcfe"/><rect x="35.0" y="108.00" width="1.0" height="1.2" fill="#d4d4d4"/><rect x="37.0" y="108.00" width="3.0" height="1.2" fill="#b5cea8"/><rect x="40.0" y="108.00" width="1.0" height="1.2" fill="#d4d4d4"/><rect x="8.0" y="110.00" width="2.0" height="1.2" fill="#9cdcfe"/><rect x="11.0" y="110.00" width="6.0" height="1.2" fill="#9cdcfe"/><rect x="17.0" y="110.00" width="1.0" height="1.2" fill="#d4d4d4"/><rect x="19.0" y="110.00" width="3.0" height="1.2" fill="#b5cea8"/><rect x="22.0" y="110.00" width="1.0" height="1.2" fill="#d4d4d4"/><rect x="12.0" y="112.00" width="9.0" height="1.2" fill="#9cdcfe"/><rect x="21.0" y="112.00" width="1.0" height="1.2" fill="#d4d4d4"/><rect x="23.0" y="112.00" width="6.0" height="1.2" fill="#ce9178"/><rect x="29.0" y="112.00" width="1.0" height="1.2" fill="#d4d4d4"/><rect x="12.0" y="114.00" width="10.0" height="1.2" fill="#9cdcfe"/><rect x="22.0" y="114.00" width="1.0" height="1.2" fill="#d4d4d4"/><rect x="12.0" y="116.00" width="7.0" height="1.2" fill="#9cdcfe"/><rect x="19.0" y="116.00" width="1.0" height="1.2" fill="#d4d4d4"/><rect x="21.0" y="116.00" width="1.0" height="1.2" fill="#b5cea8"/><rect x="8.0" y="118.00" width="1.0" height="1.2" fill="#ffd700"/><rect x="9.0" y="118.00" width="1.0" height="1.2" fill="#179fff"/><rect x="10.0" y="118.00" width="1.0" height="1.2" fill="#d4d4d4"/><rect x="4.0" y="120.00" width="1.0" height="1.2" fill="#da70d6"/><rect x="4.0" y="126.00" width="8.0" height="1.2" fill="#9cdcfe"/><rect x="12.0" y="126.00" width="1.0" height="1.2" fill="#d4d4d4"/><rect x="13.0" y="126.00" width="14.0" height="1.2" fill="#dcdcaa"/><rect x="27.0" y="126.00" width="1.0" height="1.2" fill="#da70d6"/><rect x="28.0" y="126.00" width="9.0" height="1.2" fill="#ce9178"/><rect x="37.0" y="126.00" width="1.0" height="1.2" fill="#da70d6"/><rect x="38.0" y="126.00" width="1.0" height="1.2" fill="#d4d4d4"/><rect x="39.0" y="126.00" width="2.0" height="1.2" fill="#dcdcaa"/><rect x="41.0" y="126.00" width="1.0" height="1.2" fill="#da70d6"/><rect x="42.0" y="126.00" width="7.0" height="1.2" fill="#ce9178"/><rect x="49.0" y="126.00" width="1.0" height="1.2" fill="#d4d4d4"/><rect x="51.0" y="126.00" width="8.0" height="1.2" fill="#569cd6"/><rect x="59.0" y="126.00" width="2.0" height="1.2" fill="#179fff"/><rect x="62.0" y="126.00" width="1.0" height="1.2" fill="#179fff"/><rect x="8.0" y="128.00" width="10.0" height="1.2" fill="#dcdcaa"/><rect x="18.0" y="128.00" width="2.0" height="1.2" fill="#ffd700"/><rect x="20.0" y="128.00" width="1.0" height="1.2" fill="#d4d4d4"/><rect x="4.0" y="130.00" width="1.0" height="1.2" fill="#179fff"/><rect x="5.0" y="130.00" width="1.0" height="1.2" fill="#da70d6"/><rect x="6.0" y="130.00" width="1.0" height="1.2" fill="#d4d4d4"/><rect x="4.0" y="136.00" width="6.0" height="1.2" fill="#9cdcfe"/><rect x="10.0" y="136.00" width="1.0" height="1.2" fill="#d4d4d4"/><rect x="11.0" y="136.00" width="16.0" height="1.2" fill="#dcdcaa"/><rect x="27.0" y="136.00" width="1.0" height="1.2" fill="#da70d6"/><rect x="28.0" y="136.00" width="6.0" height="1.2" fill="#ce9178"/><rect x="34.0" y="136.00" width="1.0" height="1.2" fill="#d4d4d4"/><rect x="36.0" y="136.00" width="8.0" height="1.2" fill="#569cd6"/><rect x="44.0" y="136.00" width="2.0" height="1.2" fill="#179fff"/><rect x="47.0" y="136.00" width="1.0" height="1.2" fill="#179fff"/><rect x="8.0" y="138.00" width="2.0" height="1.2" fill="#c586c0"/><rect x="11.0" y="138.00" width="1.0" height="1.2" fill="#ffd700"/><rect x="12.0" y="138.00" width="9.0" height="1.2" fill="#9cdcfe"/><rect x="22.0" y="138.00" width="3.0" height="1.2" fill="#d4d4d4"/><rect x="26.0" y="138.00" width="9.0" height="1.2" fill="#ce9178"/><rect x="35.0" y="138.00" width="1.0" height="1.2" fill="#ffd700"/><rect x="37.0" y="138.00" width="1.0" height="1.2" fill="#ffd700"/><rect x="12.0" y="140.00" width="10.0" height="1.2" fill="#dcdcaa"/><rect x="22.0" y="140.00" width="2.0" height="1.2" fill="#da70d6"/><rect x="24.0" y="140.00" width="1.0" height="1.2" fill="#d4d4d4"/><rect x="8.0" y="142.00" width="1.0" height="1.2" fill="#ffd700"/><rect x="4.0" y="144.00" width="1.0" height="1.2" fill="#179fff"/><rect x="5.0" y="144.00" width="1.0" height="1.2" fill="#da70d6"/><rect x="6.0" y="144.00" width="1.0" height="1.2" fill="#d4d4d4"/><rect x="0.0" y="146.00" width="2.0" height="1.2" fill="#ffd700"/><rect x="2.0" y="146.00" width="1.0" height="1.2" fill="#d4d4d4"/><rect x="0.0" y="148.00" width="2.0" height="1.2" fill="#808080"/><rect x="2.0" y="148.00" width="6.0" height="1.2" fill="#569cd6"/><rect x="8.0" y="148.00" width="1.0" height="1.2" fill="#808080"/><rect x="61" y="17.80" width="11" height="1.9" fill="#3a78c0"/></svg>
<!-- status bar -->
<div class="b" style="left:0px;top:993px;width:1920px;height:27px;background:#181818;border-top:1px solid #2b2b2b;"></div>
<div class="b" style="left:0px;top:993px;width:43px;height:27px;background:#0078d4;"></div>
<svg style="left:14.5px;top:998.2px" width="16" height="16" viewBox="0 0 16 16"><path d="M2.4 6.4 L6.4 10.4 L2.4 14.4 M13.4 1.6 L9.4 5.6 L13.4 9.6" fill="none" stroke="#fff" stroke-width="1.4" stroke-linecap="round" stroke-linejoin="round"/></svg>
<svg style="left:52.5px;top:997.6px" width="18" height="18" viewBox="0 0 18 18"><circle cx="9" cy="9" r="7.4" fill="none" stroke="#ccc" stroke-width="1.3"/><path d="M5.8 5.8 L12.2 12.2 M12.2 5.8 L5.8 12.2" stroke="#ccc" stroke-width="1.3" stroke-linecap="round"/></svg>
<div class="t " style="font-size:14.6px;color:#cccccc;top:994.30px;left:74.00px;">0</div>
<svg style="left:86.5px;top:998px" width="18" height="17" viewBox="0 0 18 17"><path d="M9 1.6 L16.6 15 H1.4 Z" fill="none" stroke="#ccc" stroke-width="1.3" stroke-linejoin="round"/><path d="M9 6.2 V10.6" stroke="#ccc" stroke-width="1.4" stroke-linecap="round"/><circle cx="9" cy="12.8" r=".9" fill="#ccc"/></svg>
<div class="t " style="font-size:14.6px;color:#cccccc;top:994.30px;left:108.00px;">0</div>
<div class="t " style="font-size:14.6px;color:#cccccc;top:994.30px;letter-spacing:-0.053px;left:1039.60px;">Ln 10, Col 73 (11 selected)</div>
<div class="t " style="font-size:14.6px;color:#cccccc;top:994.30px;letter-spacing:-0.503px;left:1232.70px;">Spaces: 4</div>
<div class="t " style="font-size:14.6px;color:#cccccc;top:994.30px;letter-spacing:-0.612px;left:1314.20px;">UTF-8</div>
<div class="t " style="font-size:14.6px;color:#cccccc;top:994.30px;letter-spacing:-1.456px;left:1373.40px;">CRLF</div>
<svg style="left:1427px;top:998px" width="17" height="17" viewBox="0 0 17 17"><g fill="none" stroke="#ccc" stroke-width="1.3" stroke-linecap="round" stroke-linejoin="round">
<path d="M5.6 1.6 Q3.6 1.6 3.6 3.4 V6 Q3.6 7.8 1.6 8 Q3.6 8.2 3.6 10 V12.8 Q3.6 14.6 5.6 14.6"/>
<path d="M10.8 1.6 Q12.8 1.6 12.8 3.4 V6 Q12.8 7.6 14.4 7.9"/></g>
<circle cx="12.4" cy="12.8" r="3.6" fill="#ccc"/><path d="M11 11.4 L13.8 14.2 M13.8 11.4 L11 14.2" stroke="#181818" stroke-width="1"/></svg>
<div class="t " style="font-size:14.6px;color:#cccccc;top:994.30px;letter-spacing:-1.073px;left:1451.20px;">PHP</div>
<svg style="left:1497.5px;top:997.6px" width="20" height="17" viewBox="0 0 20 17">
<path d="M5.6 0.8 Q2.6 0.8 2.4 3.6 L2.2 6 Q0.4 7.2 0.4 9.2 V11.6 Q3.6 16.2 10 16.2 Q16.4 16.2 19.6 11.6 V9.2 Q19.6 7.2 17.8 6 L17.6 3.6 Q17.4 0.8 14.4 0.8 Q11.6 0.8 10.8 2.6 H9.2 Q8.4 0.8 5.6 0.8 Z" fill="#cccccc"/>
<rect x="4.4" y="2.6" width="3.6" height="3.6" rx="1.5" fill="#181818"/><rect x="12" y="2.6" width="3.6" height="3.6" rx="1.5" fill="#181818"/>
<path d="M4.6 8.4 H15.4 V12.6 Q13 14.2 10 14.2 Q7 14.2 4.6 12.6 Z" fill="#181818"/>
<path d="M7.6 9.6 V12 M12.4 9.6 V12" stroke="#cccccc" stroke-width="1.7" stroke-linecap="round"/>
</svg>
<svg style="left:1537px;top:997.5px" width="16" height="17" viewBox="0 0 16 17"><g fill="none" stroke="#ccc" stroke-width="1.3" stroke-linecap="round">
<path d="M4.2 12.6 A6.8 6.8 0 1 1 11.8 12.6"/><path d="M5.6 9.6 A3.4 3.4 0 1 1 10.4 9.6"/></g><circle cx="8" cy="7.4" r="1.5" fill="#ccc"/><path d="M7 9.4 H9 L9.4 15.6 H6.6 Z" fill="#ccc"/></svg>
<div class="t " style="font-size:14.6px;color:#cccccc;top:994.30px;letter-spacing:-0.274px;left:1557.70px;">Go Live</div>
<div class="t " style="font-size:14.6px;color:#cccccc;top:994.30px;letter-spacing:-0.365px;left:1626.50px;">8.4</div>
<svg style="left:1666px;top:998px" width="18" height="17" viewBox="0 0 18 17"><g fill="none" stroke="#ccc" stroke-width="1.3" stroke-linejoin="round">
<path d="M11.8 1.4 A4.6 4.6 0 1 1 9.6 10 L8 11.4 H6.2 V13.2 H4.4 V15 H1.4 V12.4 L7.4 6.6 A4.6 4.6 0 0 1 11.8 1.4 Z"/></g><circle cx="12.8" cy="5" r="1.1" fill="#ccc"/></svg>
<svg style="left:1703.5px;top:998px" width="17" height="17" viewBox="0 0 17 17"><circle cx="8.5" cy="8.5" r="7.2" fill="none" stroke="#ccc" stroke-width="1.3"/><path d="M6.6 5.2 L11.6 8.5 L6.6 11.8 Z" fill="none" stroke="#ccc" stroke-width="1.2" stroke-linejoin="round"/></svg>
<div class="t " style="font-size:14.6px;color:#cccccc;top:994.30px;letter-spacing:-0.188px;left:1724.70px;">Go Live</div>
<svg style="left:1794.3px;top:998px" width="17" height="17" viewBox="0 0 17 17"><circle cx="8.5" cy="8.5" r="7.2" fill="none" stroke="#ccc" stroke-width="1.3"/><path d="M13.4 3.6 L3.6 13.4" stroke="#ccc" stroke-width="1.3"/></svg>
<div class="t " style="font-size:14.6px;color:#cccccc;top:994.30px;letter-spacing:0.105px;left:1815.80px;">Prettier</div>
<svg style="left:1885px;top:998px" width="16" height="17" viewBox="0 0 16 17"><path d="M8 1.2 Q3.6 1.2 3.6 6 V10 L1.8 12.6 H14.2 L12.4 10 V6 Q12.4 1.2 8 1.2 Z" fill="none" stroke="#ccc" stroke-width="1.3" stroke-linejoin="round"/><path d="M6.2 13.4 Q6.4 15.4 8 15.4 Q9.6 15.4 9.8 13.4" fill="none" stroke="#ccc" stroke-width="1.3"/></svg>
<!-- taskbar -->
<div class="b" style="left:0px;top:1020px;width:1920px;height:60px;background:linear-gradient(90deg,#f2dfde 0%,#f0dedf 20%,#eedde1 40%,#eadde4 55%,#e5deea 66%,#dfe1ed 78%,#e2dfeb 88%,#eadde5 95%,#eedde1 100%);"></div>
<svg style="left:25px;top:1035px" width="27" height="30" viewBox="0 0 27 30">
<ellipse cx="12" cy="15.6" rx="11" ry="3.4" fill="#e07f0a"/><ellipse cx="12" cy="13.6" rx="11" ry="3.4" fill="#f6a51e"/>
<ellipse cx="14.6" cy="10.6" rx="10.4" ry="3.3" fill="#e07f0a"/><ellipse cx="14.6" cy="8.8" rx="10.4" ry="3.3" fill="#f8ab25"/>
<ellipse cx="12.6" cy="5.6" rx="10.4" ry="3.3" fill="#e07f0a"/><ellipse cx="12.6" cy="3.9" rx="10.4" ry="3.3" fill="#f9b233"/>
<path d="M9.4 22.6 L14.6 27.2 L19.8 22.6" fill="none" stroke="#d6450f" stroke-width="2.6" stroke-linejoin="round" stroke-linecap="round"/>
</svg>
<div class="b" style="left:39px;top:1028px;width:19.6px;height:19.6px;border-radius:50%;background:#c42b1c;color:#fff;font-size:13.5px;text-align:center;line-height:19.6px">4</div>
<div class="t " style="font-size:15px;color:#1b1b1b;top:1028.40px;letter-spacing:-1.107px;left:64.70px;">USD/JPY</div>
<div class="t " style="font-size:15px;color:#c42b1c;top:1048.40px;letter-spacing:-0.421px;left:65.00px;">-0.48%</div>
<svg style="left:640px;top:1036px" width="29" height="29" viewBox="0 0 29 29"><defs><linearGradient id="wg" x1="0" y1="0" x2="1" y2="1"><stop offset="0" stop-color="#56cbff"/><stop offset="1" stop-color="#0670d0"/></linearGradient></defs>
<path d="M1.4 0 H13.7 V13.7 H0 V1.4 Q0 0 1.4 0 Z M15.3 0 H27.6 Q29 0 29 1.4 V13.7 H15.3 Z M0 15.3 H13.7 V29 H1.4 Q0 29 0 27.6 Z M15.3 15.3 H29 V27.6 Q29 29 27.6 29 H15.3 Z" fill="url(#wg)"/></svg>
<div class="b" style="left:686.5px;top:1030.5px;width:274px;height:39px;background:rgba(252,247,248,.92);border:1px solid #dccccd;border-radius:20px;box-shadow:0 1px 1.5px rgba(120,80,80,.18);"></div>
<svg style="left:700px;top:1041px" width="21" height="20" viewBox="0 0 21 20"><circle cx="8.6" cy="8.4" r="6.6" fill="none" stroke="#1b1b1b" stroke-width="2"/><path d="M13.6 13.4 L18.6 18.2" stroke="#1b1b1b" stroke-width="2.2" stroke-linecap="round"/></svg>
<div class="t " style="font-size:17.5px;color:#4a4a4a;top:1039.20px;letter-spacing:-0.825px;left:732.50px;">Search</div>
<svg style="left:892px;top:1034px" width="56" height="34" viewBox="0 0 56 34">
<path d="M8 2 Q18 18 34 30 L50 31" fill="none" stroke="#8a4b2a" stroke-width="2.6" stroke-linecap="round"/>
<path d="M3 8 Q6 10 5 16 Q1 14 3 8 Z M14 20 Q20 20 24 24 Q17 25 14 20 Z M20 18 Q25 16 28 19 Q23 21 20 18 Z" fill="#6aa84f"/>
<ellipse cx="41" cy="23" rx="9" ry="9.5" fill="#a7adb8"/><ellipse cx="44" cy="24" rx="5.4" ry="7" fill="#cfd3da"/>
<circle cx="23.6" cy="6.6" r="5" fill="#9aa0ac"/><circle cx="39.4" cy="6" r="5" fill="#9aa0ac"/><circle cx="23.8" cy="6.8" r="2.8" fill="#e9e3e6"/><circle cx="39.2" cy="6.2" r="2.8" fill="#e9e3e6"/>
<ellipse cx="31.4" cy="12.6" rx="8.4" ry="7.8" fill="#b4bac5"/>
<ellipse cx="31.2" cy="15" rx="2" ry="3" fill="#2b2b33"/><circle cx="27.2" cy="11.6" r="1" fill="#3a2030"/><circle cx="35.2" cy="11.6" r="1" fill="#3a2030"/>
<ellipse cx="34" cy="29" rx="4" ry="2.4" fill="#8f95a1"/><ellipse cx="46" cy="30.6" rx="4.4" ry="2.4" fill="#8f95a1"/>
</svg>
<div class="b" style="left:976px;top:1044px;width:23px;height:20.5px;background:linear-gradient(#2a2a2a,#0e0e0e);border-radius:2.5px;"></div>
<div class="b" style="left:983.5px;top:1036px;width:22px;height:20.5px;background:rgba(255,255,255,.72);border-radius:2.5px;box-shadow:0 0 1px rgba(0,0,0,.25);"></div>
<svg style="left:1030.5px;top:1034.5px" width="31" height="31" viewBox="0 0 31 31"><defs>
<linearGradient id="eg1" x1="0" y1="0" x2="1" y2="0"><stop offset="0" stop-color="#2fc3e6"/><stop offset=".55" stop-color="#37c995"/><stop offset="1" stop-color="#6edc52"/></linearGradient>
<linearGradient id="eg2" x1="0" y1="0" x2="0" y2="1"><stop offset="0" stop-color="#1a8fdf"/><stop offset="1" stop-color="#0c59a4"/></linearGradient></defs>
<path d="M2.2 11.4 Q5 0.8 16.4 0.6 Q27.6 1 30.4 10.6 Q31 16 27 18.6 Q22.4 20.6 18.8 18.6 Q20.8 17 20.8 14.4 Q20.2 9.6 14.6 9.4 Q6.4 9.6 2.2 11.4 Z" fill="url(#eg1)"/>
<path d="M2.2 11.6 Q-1.8 21.4 6.4 27.6 Q13.8 32.4 22 29.4 Q26.8 27.4 29 23 Q24.4 26 19.4 24.6 Q11.8 22 11.4 14.8 Q11.6 11.4 14.6 9.4 Q7.4 8.6 2.2 11.6 Z" fill="url(#eg2)"/>
<path d="M11.4 14.8 Q9.6 20.4 13 25.4 Q16.6 30 22 29.4 Q14.4 29 10.4 23.4 Q7.8 18.8 11.4 14.8 Z" fill="#0b4f94" opacity=".75"/>
</svg>
<svg style="left:1085.5px;top:1036.5px" width="31" height="28" viewBox="0 0 31 28"><defs><linearGradient id="fg" x1="0" y1="0" x2="0" y2="1"><stop offset="0" stop-color="#ffd75e"/><stop offset="1" stop-color="#f7b731"/></linearGradient></defs>
<path d="M0.4 2.4 Q0.4 0.6 2.2 0.6 H9.6 Q10.8 0.6 11.6 1.6 L13 3.4 H0.4 Z" fill="#e9a31a"/>
<path d="M0.4 3.2 H28.8 Q30.6 3.2 30.6 5 V25.2 Q30.6 27 28.8 27 H2.2 Q0.4 27 0.4 25.2 Z" fill="url(#fg)"/>
<path d="M5.4 27 V21.2 Q5.4 19.4 7.2 19.4 H23.8 Q25.6 19.4 25.6 21.2 V27 Z" fill="#1787dc"/>
<path d="M8.6 22.6 H22.4" stroke="#0b5cab" stroke-width="1.3" stroke-linecap="round"/>
</svg>
<svg style="left:1140.5px;top:1034.5px" width="31" height="31" viewBox="0 0 31 31">
<circle cx="15.5" cy="15.5" r="15" fill="#fbc116"/>
<path d="M15.5 15.5 L2.5 8 A15 15 0 0 1 28.5 8 Z" fill="#e33b2e"/>
<path d="M15.5 15.5 L2.5 8 A15 15 0 0 0 15.5 30.5 L22.6 19.4 Z" fill="#2ca14c"/>
<path d="M15.5 15.5 L28.5 8 H15.5 Z" fill="#e33b2e"/>
<circle cx="15.5" cy="15.5" r="7" fill="#fff"/><circle cx="15.5" cy="15.5" r="5.5" fill="#3f86f4"/>
</svg>
<div class="b" style="left:1156.5px;top:1029px;width:20.4px;height:20.4px;border-radius:50%;background:#8796a0;border:0.6px solid #7b8790;color:#dfe6ea;font-size:12px;font-weight:bold;text-align:center;line-height:19.4px">D</div>
<div class="b" style="left:1186.5px;top:1026px;width:48.5px;height:48.5px;background:rgba(255,255,255,.5);border-radius:5px;border:1px solid rgba(255,255,255,.35);"></div>
<svg style="left:1196px;top:1035px" width="30" height="30" viewBox="0 0 30 30">
<path d="M2.7 19.4 L22.6 4.2" stroke="#0a7abf" stroke-width="5.6" stroke-linecap="round"/>
<path d="M2.7 9.9 L22.6 25.6" stroke="#0b86d2" stroke-width="5.6" stroke-linecap="round"/>
<path d="M22.4 0.2 Q22 0 22 0.6 V29.2 Q22 29.9 22.6 29.6 L29.4 26.2 Q30 25.9 30 25.2 V4.6 Q30 3.9 29.4 3.6 Z" fill="#27a5f1"/>
<path d="M22 8.6 L14 14.8 L22 21 Z" fill="#efeaf0"/>
</svg>
<div class="b" style="left:1201px;top:1070.5px;width:20px;height:3.6px;background:#0a78d4;border-radius:2px;"></div>
<div class="b" style="left:1251px;top:1035px;width:30px;height:30px;background:#fa1220;border-radius:4.5px;"></div>
<svg style="left:1251px;top:1035px" width="30" height="30" viewBox="0 0 30 30"><path d="M3.9 9.2 H25.7 L18.6 23 H17.8 L14.8 16.2 L11.6 23 H10.8 Z" fill="#fff"/><path d="M7.6 11.5 H15.2 L11.3 18.6 Z M18.4 11.5 H22.5 L19.6 17.2 Z" fill="#fa1220"/><path d="M15.6 11 L17.2 14.6" stroke="#fa1220" stroke-width=".8"/></svg>
<div class="b" style="left:1041.7px;top:1070.6px;width:8.6px;height:3.4px;background:#8d858a;border-radius:2px;"></div>
<div class="b" style="left:1096.7px;top:1070.6px;width:8.6px;height:3.4px;background:#8d858a;border-radius:2px;"></div>
<div class="b" style="left:1151.7px;top:1070.6px;width:8.6px;height:3.4px;background:#8d858a;border-radius:2px;"></div>
<div class="b" style="left:1261.7px;top:1070.6px;width:8.6px;height:3.4px;background:#8d858a;border-radius:2px;"></div>
<svg style="left:1649px;top:1045px" width="15" height="9" viewBox="0 0 15 9"><path d="M1 7.8 L7.5 1.4 L14 7.8" fill="none" stroke="#1b1b1b" stroke-width="1.5" stroke-linecap="round" stroke-linejoin="round"/></svg>
<svg style="left:1685px;top:1041px" width="22" height="18" viewBox="0 0 22 18"><path d="M5.4 14.6 Q1 14.6 1 10.6 Q1 7.2 4.6 6.6 Q5.6 2 10.6 2 Q14.6 2 16 5.6 Q20.6 6 20.6 10.2 Q20.6 14.6 16.4 14.6 Z" fill="#b9b9bd" stroke="#1b1b1b" stroke-width="1.3"/><path d="M3.6 1.6 L18.6 16.8" stroke="#1b1b1b" stroke-width="1.3" stroke-linecap="round"/></svg>
<svg style="left:1725px;top:1039.5px" width="22" height="21" viewBox="0 0 22 21"><path d="M8.4 8.2 L6.4 1.6 H8.4 L12.8 8.2 H18 Q20.8 8.2 20.8 10.4 Q20.8 12.4 18 12.4 H12.8 L8.4 19.4 H6.4 L8.4 12.4 H4.6 L3 14.6 H1.4 L2.2 10.4 L1.4 6.2 H3 L4.6 8.2 Z" fill="none" stroke="#1b1b1b" stroke-width="1.2" stroke-linejoin="round"/></svg>
<svg style="left:1755px;top:1042px" width="22" height="16" viewBox="0 0 22 16"><path d="M1.2 5.4 H4.2 L8.4 1.4 V14.6 L4.2 10.6 H1.2 Z" fill="none" stroke="#1b1b1b" stroke-width="1.2" stroke-linejoin="round"/><path d="M11.4 5 Q13 8 11.4 11" fill="none" stroke="#1b1b1b" stroke-width="1.2" stroke-linecap="round"/><path d="M14.4 3 Q17 8 14.4 13" fill="none" stroke="#8f8f96" stroke-width="1.1" stroke-linecap="round"/><path d="M17.4 1.2 Q21 8 17.4 14.8" fill="none" stroke="#bdbdc4" stroke-width="1.1" stroke-linecap="round"/></svg>
<svg style="left:1785px;top:1040px" width="22" height="17" viewBox="0 0 22 17"><path d="M5.6 4.4 H17 Q18.4 4.4 18.4 5.8 V13.8 Q18.4 15.2 17 15.2 H3.4 Q2 15.2 2 13.8 V10" fill="none" stroke="#1b1b1b" stroke-width="1.3"/><rect x="4.4" y="6.6" width="11.8" height="6.4" rx=".8" fill="#1b1b1b"/><path d="M18.8 7.8 H20.4 V11.8 H18.8 Z" fill="#1b1b1b"/><path d="M4.4 0.6 L1 6.2 H3.6 L2.6 10 L6.6 4.2 H4 Z" fill="#1b1b1b" stroke="#e4dde8" stroke-width=".5"/></svg>
<div class="t " style="font-size:15px;color:#1b1b1b;top:1027.70px;letter-spacing:-0.266px;right:24.20px;">4:30 PM</div>
<div class="t " style="font-size:15px;color:#1b1b1b;top:1048.40px;letter-spacing:0.230px;right:24.20px;">9/30/2025</div>
</body></html>
